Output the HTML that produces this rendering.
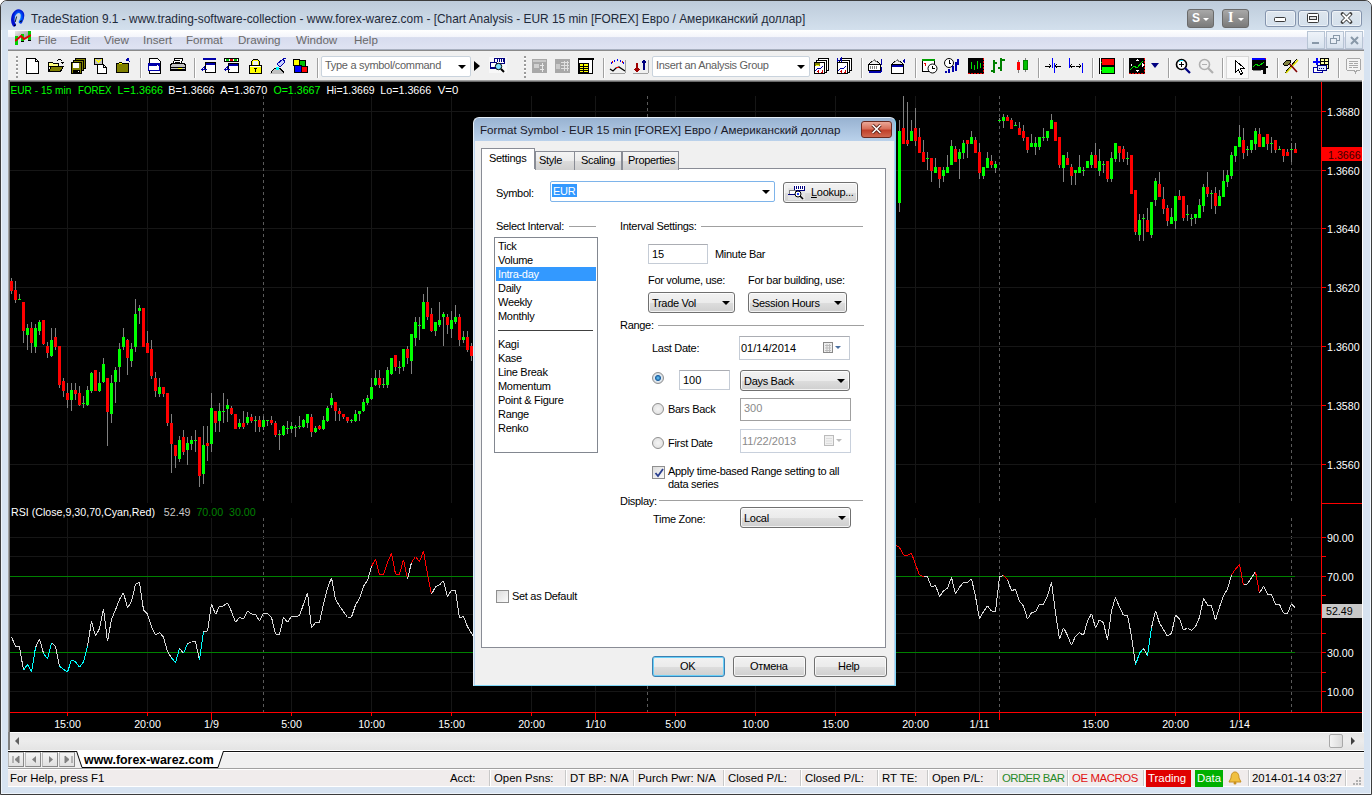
<!DOCTYPE html>
<html><head><meta charset="utf-8"><style>
*{margin:0;padding:0;box-sizing:border-box}
html,body{width:1372px;height:795px;overflow:hidden;background:#fff}
body{position:relative;font-family:"Liberation Sans",sans-serif;font-size:11px;color:#000}
.abs{position:absolute}
.t{position:absolute;white-space:pre;line-height:1}

.frame{left:0;top:0;width:1372px;height:795px;background:#d7e3f1;border:1px solid #3c3c3c;border-radius:7px 7px 0 0;box-shadow:inset 1px 1px 0 #eef4fb,inset -1px -1px 0 #eef4fb}
.title{left:1px;top:1px;width:1370px;height:29px;background:linear-gradient(#bdcbda,#d3e0ed);border-radius:6px 6px 0 0}
.ttext{font-size:11.9px;color:#1e2a3a}
.menubar{left:8px;top:30px;width:1356px;height:20px;background:linear-gradient(#ffffff 0,#f4f5fb 35%,#d7dcee 40%,#dfe3f2 100%);border-bottom:1px solid #a8b0c0}
.menu{font-size:11.6px;color:#6a6a6a}
.toolbar{left:8px;top:50px;width:1356px;height:31px;background:#f0f0f0;border-top:1px solid #8a8a8a}
.sep{position:absolute;top:58px;width:2px;height:20px;border-left:1px solid #a0a0a0;border-right:1px solid #fff}
.grip{position:absolute;top:56px;width:2px;height:22px;background:repeating-linear-gradient(#9a9a9a 0 2px,#fff 2px 3px,transparent 3px 4px)}
.combo{position:absolute;top:56px;height:21px;background:#fff;border:1px solid #c9d3dd;border-radius:2px}
.combo span{position:absolute;left:3px;top:3px;font-size:11px;letter-spacing:-0.3px;line-height:1;color:#606060;white-space:pre}
.darr{position:absolute;width:0;height:0;border-left:4px solid transparent;border-right:4px solid transparent;border-top:4px solid #000}
.ico{position:absolute;width:18px;height:18px}
.wbtn{position:absolute;top:10px;height:17px;border:1px solid #8494ad;border-radius:3px;background:linear-gradient(rgba(255,255,255,.45),rgba(255,255,255,.1));box-shadow:inset 0 0 0 1px rgba(255,255,255,.5)}
.mdibtn{position:absolute;top:31px;width:18px;height:18px;border:1px solid #b7c4d4;background:linear-gradient(#eef3f9,#d8e2ee)}

.dlg{left:473px;top:117px;width:423px;height:569px;border-radius:6px 6px 0 0;background:linear-gradient(#98b2d1 0,#bcd3ec 24px,#bcd3ec 100%);border:1px solid #e4eef8;border-right-color:#7fd8f8;border-bottom-color:#7fd8f8}
.dcont{left:475px;top:141px;width:419px;height:544px;background:#f0f0f0}
.dt{font-size:11px;letter-spacing:-0.3px;color:#000}
.tab{position:absolute;height:19px;top:151px;border:1px solid #898c95;border-bottom:none;background:linear-gradient(#f4f4f4 0,#ebebeb 50%,#dcdcdc 51%,#cfcfcf 100%)}
.edit{position:absolute;background:#fff;border:1px solid #c5ccd6;border-top-color:#abadb3}
.num{letter-spacing:0}
.btn{position:absolute;border:1px solid #707070;border-radius:3px;background:linear-gradient(#f2f2f2 0,#ebebeb 50%,#dddddd 51%,#cfcfcf 100%);box-shadow:inset 0 0 0 1px rgba(255,255,255,.75)}
.radio{position:absolute;width:12px;height:12px;border-radius:50%;border:1px solid #8f8f8f;background:radial-gradient(circle at 50% 50%,#f4f4f4 0,#dcdcdc 100%)}
.chk{position:absolute;width:13px;height:13px;border:1px solid #8f8f8f;background:linear-gradient(135deg,#dcdcdc,#fbfbfb)}
.gl{position:absolute;height:2px;background:#a0a0a0;border-bottom:1px solid #fff}
.sb{font-size:11.4px;color:#000}
.ssep{position:absolute;top:770px;width:2px;height:16px;border-left:1px solid #c8c8c8;border-right:1px solid #fff}

</style></head><body>
<div class="abs frame"></div><div class="abs title"></div><svg class="abs" style="left:11px;top:9px" width="14" height="18" viewBox="0 0 14 18"><defs><radialGradient id="ag" cx="0.6" cy="0.45" r="0.6"><stop offset="0" stop-color="#40e0ff"/><stop offset="0.5" stop-color="#0060ff"/><stop offset="1" stop-color="#0010d0"/></radialGradient></defs><path d="M3.2 15.8C1 13 1.5 6 5 3.2C8 1 11.5 2.5 11.5 6.5C11.5 9 10.5 11.5 9.6 12.8" fill="none" stroke="url(#ag)" stroke-width="3.6" stroke-linecap="round"/><path d="M5.6 7.5L4.2 13" stroke="#102030" stroke-width="1"/><path d="M9.5 13l1-1.5" stroke="#000" stroke-width="1.2"/><path d="M3 16.6l1.6-.6" stroke="#000" stroke-width="1.2"/></svg><div class="t ttext" style="left:31px;top:14px">TradeStation 9.1 - www.trading-software-collection - www.forex-warez.com - [Chart Analysis - EUR 15 min [FOREX] Евро / Американский доллар]</div><div class="abs" style="left:1187px;top:9px;width:27px;height:19px;background:linear-gradient(#a8a8a8,#7a7a7a);border:1px solid #6a6a6a;border-radius:3px"></div><div class="t" style="left:1192px;top:12px;font-size:12px;font-weight:bold;color:#fff">S</div><div class="darr" style="left:1203px;top:18px;border-top-color:#fff;border-width:3px 3px 0 3px"></div><div class="abs" style="left:1222px;top:9px;width:27px;height:19px;background:linear-gradient(#a8a8a8,#7a7a7a);border:1px solid #6a6a6a;border-radius:3px"></div><div class="t" style="left:1228px;top:11px;font-size:14px;font-weight:bold;font-family:&quot;Liberation Serif&quot;,serif;color:#fff">I</div><div class="darr" style="left:1238px;top:18px;border-top-color:#fff;border-width:3px 3px 0 3px"></div><div class="wbtn" style="left:1265px;width:31px"></div><svg class="abs" style="left:1274px;top:17px" width="12" height="6"><rect x="0.5" y="0.5" width="11" height="4" rx="1" fill="#fff" stroke="#3a3a3a"/></svg><div class="wbtn" style="left:1298px;width:31px"></div><svg class="abs" style="left:1307px;top:13px" width="12" height="10"><rect x="0.5" y="0.5" width="11" height="9" rx="1" fill="#fff" stroke="#3a3a3a"/><rect x="2.5" y="3.5" width="7" height="3" fill="#e0e0e0" stroke="#3a3a3a"/></svg><div class="wbtn" style="left:1331px;width:31px"></div><svg class="abs" style="left:1340px;top:12px" width="13" height="12" viewBox="0 0 13 12"><path d="M2.5 2l8 8M10.5 2l-8 8" stroke="#3a3a3a" stroke-width="3.6" stroke-linecap="round"/><path d="M2.5 2l8 8M10.5 2l-8 8" stroke="#fff" stroke-width="1.8"/></svg><div class="abs menubar"></div><svg class="abs" style="left:15px;top:31px" width="16" height="15" viewBox="0 0 16 15"><defs><linearGradient id="mg" x1="0" y1="0" x2="1" y2="1"><stop offset="0" stop-color="#e8e8e8"/><stop offset="1" stop-color="#808080"/></linearGradient></defs><path d="M0 0H16V4L9 8L6 5L0 10Z" fill="url(#mg)"/><rect x="0" y="5" width="3" height="9" fill="#00d000"/><rect x="6" y="3" width="3" height="8" fill="#00d000"/><rect x="6" y="10" width="3" height="1" fill="#000"/><rect x="13" y="0" width="3" height="10" fill="#00d000"/><rect x="13" y="9" width="3" height="1" fill="#000"/><path d="M0 10L6 5L9 8L16 4" stroke="#e00000" stroke-width="2" fill="none"/></svg><div class="t menu" style="left:38px;top:34px">File</div><div class="t menu" style="left:70px;top:34px">Edit</div><div class="t menu" style="left:104px;top:34px">View</div><div class="t menu" style="left:143px;top:34px">Insert</div><div class="t menu" style="left:186px;top:34px">Format</div><div class="t menu" style="left:238px;top:34px">Drawing</div><div class="t menu" style="left:296px;top:34px">Window</div><div class="t menu" style="left:354px;top:34px">Help</div><div class="mdibtn" style="left:1307px"></div><div class="abs" style="left:1312px;top:42px;width:7px;height:2px;background:#8898a8"></div><div class="mdibtn" style="left:1326px"></div><svg class="abs" style="left:1330px;top:35px" width="10" height="10"><rect x="3.5" y="0.5" width="6" height="5" fill="none" stroke="#8898a8"/><rect x="0.5" y="3.5" width="6" height="5" fill="#e8eef5" stroke="#8898a8"/></svg><div class="mdibtn" style="left:1345px"></div><svg class="abs" style="left:1350px;top:36px" width="9" height="9"><path d="M1 1l7 7M8 1l-7 7" stroke="#8898a8" stroke-width="2"/></svg><div class="abs toolbar"></div><div class="sep" style="left:140px"></div><div class="sep" style="left:194px"></div><div class="sep" style="left:317px"></div><div class="sep" style="left:603px"></div><div class="sep" style="left:861px"></div><div class="sep" style="left:915px"></div><div class="sep" style="left:1038px"></div><div class="sep" style="left:1092px"></div><div class="sep" style="left:1123px"></div><div class="sep" style="left:1168px"></div><div class="sep" style="left:1222px"></div><div class="sep" style="left:1277px"></div><div class="sep" style="left:1308px"></div><div class="sep" style="left:1338px"></div><div class="grip" style="left:16px"></div><div class="grip" style="left:524px"></div><div class="combo" style="left:321px;width:150px"><span>Type a symbol/command</span><div class="darr" style="left:136px;top:8px"></div></div><div class="abs" style="left:474px;top:61px;width:0;height:0;border-top:5px solid transparent;border-bottom:5px solid transparent;border-left:6px solid #000"></div><div class="combo" style="left:652px;width:158px"><span>Insert an Analysis Group</span><div class="darr" style="left:144px;top:8px"></div></div><div class="abs" style="left:1226px;top:56px;width:23px;height:23px;background:#fafafa;border:1px solid #d8d8d8"></div><svg class="ico" style="left:25px;top:57px" width="18" height="18" viewBox="0 0 18 18" shape-rendering="crispEdges"><path d="M1.5 1.5H10.5L13.5 4.5V16.5H1.5Z" fill="#fff" stroke="#000"/><path d="M10.5 1.5V4.5H13.5" fill="none" stroke="#000"/></svg><svg class="ico" style="left:47px;top:57px" width="18" height="18" viewBox="0 0 18 18" shape-rendering="crispEdges"><path d="M1.5 5.5H5.5L6.5 6.5H11.5V9.5H1.5Z" fill="#ffff80" stroke="#000"/><path d="M1.5 14.5L4.5 9.5H16.5L13.5 14.5Z" fill="#808000" stroke="#000"/><path d="M1.5 14.5V6.5" stroke="#000"/><path d="M9.5 4.5L11.5 2.5H13.5L15.5 4.5" fill="none" stroke="#000"/><path d="M14 5h3M15 5v2" stroke="#000"/></svg><svg class="ico" style="left:70px;top:57px" width="18" height="18" viewBox="0 0 18 18" shape-rendering="crispEdges"><rect x="5.5" y="1.5" width="10" height="10" fill="#808000" stroke="#000"/><rect x="3.5" y="3.5" width="10" height="10" fill="#808000" stroke="#000"/><rect x="1.5" y="5.5" width="10" height="11" fill="#808000" stroke="#000"/><rect x="3" y="6" width="6" height="5" fill="#fff"/><rect x="3" y="13" width="7" height="3" fill="#000"/><rect x="8" y="14" width="1" height="1" fill="#fff"/></svg><svg class="ico" style="left:93px;top:57px" width="18" height="18" viewBox="0 0 18 18" shape-rendering="crispEdges"><rect x="1.5" y="1.5" width="8" height="6" fill="#c0c0c0" stroke="#000"/><path d="M2 2l3.5 3 3.5-3" stroke="#ffff00" fill="none"/><path d="M4.5 7.5H10.5L13.5 10.5V16.5H4.5Z" fill="#fff" stroke="#000"/><path d="M10.5 7.5V10.5H13.5" fill="none" stroke="#000"/></svg><svg class="ico" style="left:115px;top:57px" width="18" height="18" viewBox="0 0 18 18" shape-rendering="crispEdges"><path d="M1.5 6.5H3.5L4.5 5.5H6.5L7.5 6.5H13.5V15.5H1.5Z" fill="#808000" stroke="#000"/><rect x="4" y="6" width="3" height="1" fill="#ffff00"/><path d="M12 2h2M12 2v2M12 2l3 3" stroke="#00a" stroke-width="1.2" fill="none"/></svg><svg class="ico" style="left:147px;top:57px" width="18" height="18" viewBox="0 0 18 18" shape-rendering="crispEdges"><path d="M2.5 1.5H10.5L13.5 4.5V16.5H2.5Z" fill="#fff" stroke="#000"/><rect x="1.5" y="6.5" width="11" height="7" fill="#fff" stroke="#00a"/><rect x="2" y="7" width="10" height="2" fill="#00a"/><rect x="10" y="8" width="1" height="1" fill="#fff"/></svg><svg class="ico" style="left:169px;top:57px" width="18" height="18" viewBox="0 0 18 18" shape-rendering="crispEdges"><path d="M5.5 1.5H13.5L12.5 6.5H4.5Z" fill="#fff" stroke="#000"/><path d="M6 3h5M6 5h5" stroke="#000"/><path d="M2.5 6.5H15.5L16.5 8.5V13.5H1.5V8.5Z" fill="#c0c0c0" stroke="#000"/><path d="M2 10h14M2 12h14" stroke="#000"/><rect x="9" y="11" width="4" height="1" fill="#ffff00"/></svg><svg class="ico" style="left:200px;top:57px" width="18" height="18" viewBox="0 0 18 18" shape-rendering="crispEdges"><rect x="3" y="1" width="13" height="2" fill="#00a"/><rect x="5.5" y="5.5" width="10" height="10" fill="#fff" stroke="#000"/><rect x="6" y="6" width="9" height="2" fill="#00a"/><path d="M1.5 12.5L3.5 10.5M1.5 12.5L3.5 14.5M2 12.5H7" stroke="#00a" fill="none"/><path d="M4 12V9" stroke="#00a"/></svg><svg class="ico" style="left:223px;top:57px" width="18" height="18" viewBox="0 0 18 18" shape-rendering="crispEdges"><rect x="1.5" y="1.5" width="14" height="3" fill="#fff" stroke="#000"/><rect x="3" y="2" width="3" height="2" fill="#00c000"/><rect x="7" y="2" width="3" height="2" fill="#e00000"/><rect x="11" y="2" width="3" height="2" fill="#00c000"/><rect x="5.5" y="6.5" width="10" height="9" fill="#fff" stroke="#000"/><rect x="6" y="7" width="9" height="2" fill="#00a"/><path d="M1.5 12.5L3.5 10.5M1.5 12.5L3.5 14.5M2 12.5H7" stroke="#00a" fill="none"/><path d="M4 12V9" stroke="#00a"/></svg><svg class="ico" style="left:248px;top:57px" width="18" height="18" viewBox="0 0 18 18" shape-rendering="crispEdges"><path d="M3.5 8.5V4.5L5.5 2.5H9.5L11.5 4.5V8.5" fill="none" stroke="#000" stroke-width="1"/><path d="M4.5 8.5V4.5L6 3H9L10.5 4.5V8.5" fill="none" stroke="#ffff00"/><rect x="1.5" y="8.5" width="12" height="8" fill="#ffff00" stroke="#000"/><rect x="2" y="9" width="11" height="1" fill="#fff"/><rect x="6" y="11" width="3" height="1" fill="#000"/><rect x="7" y="12" width="1" height="3" fill="#000"/></svg><svg class="ico" style="left:269px;top:57px" width="18" height="18" viewBox="0 0 18 18" shape-rendering="crispEdges"><path d="M8.5 7.5L14.5 1.5H16.5" stroke="#00a" fill="none"/><path d="M8 7L14 2L16 5L11 10Z" fill="#c8d0ff" stroke="#00a"/><path d="M1.5 16.5Q8 5 15.5 16.5" fill="#c0c0c0" stroke="#000"/><rect x="7" y="10" width="3" height="3" fill="#00ffff"/></svg><svg class="ico" style="left:292px;top:57px" width="18" height="18" viewBox="0 0 18 18" shape-rendering="crispEdges"><rect x="1.5" y="2.5" width="6" height="6" fill="#ffff00" stroke="#000"/><rect x="7.5" y="3.5" width="6" height="6" fill="#00c000" stroke="#000"/><rect x="2.5" y="8.5" width="7" height="7" fill="#0000ff" stroke="#000"/><rect x="9.5" y="9.5" width="6" height="6" fill="#ff0000" stroke="#000"/></svg><svg class="ico" style="left:489px;top:57px" width="18" height="18" viewBox="0 0 18 18" shape-rendering="crispEdges"><rect x="0" y="0" width="18" height="16" fill="#f8f8f8"/><rect x="5.5" y="1.5" width="10" height="5" fill="#fff" stroke="#000080"/><path d="M8 2v3M10 2v3M12 2v3M14 2v3" stroke="#000080"/><rect x="1.5" y="5.5" width="6" height="5" fill="#fff" stroke="#000080"/><path d="M1 11.5h6" stroke="#000080"/><circle cx="9.5" cy="9.5" r="3.2" fill="#80e0ff" stroke="#000" shape-rendering="auto"/><path d="M12 12l3 3" stroke="#000" stroke-width="2" shape-rendering="auto"/></svg><svg class="ico" style="left:531px;top:57px" width="18" height="18" viewBox="0 0 18 18" shape-rendering="crispEdges"><rect x="1" y="2" width="15" height="14" fill="#a8a8a8"/><rect x="2" y="3" width="13" height="2" fill="#c8c8c8"/><path d="M11 6v9M9 8h4M9 12h4" stroke="#e8e8e8"/><rect x="3" y="7" width="5" height="4" fill="#d0d0d0"/></svg><svg class="ico" style="left:554px;top:57px" width="18" height="18" viewBox="0 0 18 18" shape-rendering="crispEdges"><rect x="1" y="2" width="15" height="14" fill="#a8a8a8"/><path d="M7 5h8M7 8h8M7 11h8M10 4v10M13 4v10" stroke="#e0e0e0"/><rect x="2" y="7" width="4" height="5" fill="#c8c8c8"/></svg><svg class="ico" style="left:577px;top:57px" width="18" height="18" viewBox="0 0 18 18" shape-rendering="crispEdges"><rect x="1.5" y="1.5" width="14" height="15" fill="#fff" stroke="#000"/><rect x="1" y="1" width="16" height="2" fill="#000"/><rect x="2.5" y="6.5" width="9" height="9" fill="#ffff00" stroke="#000"/><path d="M3 9h8M3 11h8M3 13h8M6.5 7v8" stroke="#000"/></svg><svg class="ico" style="left:609px;top:57px" width="18" height="18" viewBox="0 0 18 18" shape-rendering="crispEdges"><path d="M2 5v2M5 3v2M8 2v2M11 3v2M14 5v2" stroke="#00f"/><path d="M3 4v2M13 4v2" stroke="#c00"/><path d="M1 12L4 14L7 11L10 10L13 12L16 14" stroke="#000" fill="none" shape-rendering="auto" stroke-width="1.3"/><path d="M7 11L10 10" stroke="#e00"/><path d="M1 16.5H16" stroke="#a0a0a0"/><path d="M16.5 3V16" stroke="#a0a0a0"/></svg><svg class="ico" style="left:632px;top:57px" width="18" height="18" viewBox="0 0 18 18" shape-rendering="crispEdges"><path d="M5 6v8M3 12l2 2 2-2" stroke="#a00000" fill="none" stroke-width="1.5"/><path d="M12 13V4M10 6l2-2 2 2" stroke="#000080" fill="none" stroke-width="1.5"/><path d="M1 16.5H16M16.5 3V16" stroke="#a0a0a0"/></svg><svg class="ico" style="left:813px;top:57px" width="18" height="18" viewBox="0 0 18 18" shape-rendering="crispEdges"><rect x="5.5" y="1.5" width="10" height="12" fill="#fff" stroke="#000"/><rect x="3.5" y="3.5" width="10" height="12" fill="#fff" stroke="#000"/><rect x="1.5" y="5.5" width="10" height="11" fill="#fff" stroke="#000"/><rect x="2" y="6" width="5" height="3" fill="#808000"/><path d="M3 8h3" stroke="#ffff00"/><path d="M2 14L5 11L7 12L10 9" stroke="#00a" fill="none"/><path d="M5 13v3M4 14h2M9 13v3M8 15h2" stroke="#c00"/></svg><svg class="ico" style="left:836px;top:57px" width="18" height="18" viewBox="0 0 18 18" shape-rendering="crispEdges"><rect x="5.5" y="1.5" width="10" height="12" fill="#fff" stroke="#000"/><rect x="3.5" y="3.5" width="10" height="12" fill="#fff" stroke="#000"/><rect x="1.5" y="5.5" width="10" height="11" fill="#fff" stroke="#000"/><path d="M1 5V1.5L3 4L5 1.5V5" stroke="#00a" fill="none"/><path d="M2 14L5 11L7 12L10 9" stroke="#00a" fill="none"/><path d="M5 13v3M4 14h2M9 13v3M8 15h2" stroke="#c00"/></svg><svg class="ico" style="left:867px;top:57px" width="18" height="18" viewBox="0 0 18 18" shape-rendering="crispEdges"><path d="M1.5 7.5L7.5 2.5L13.5 7.5" fill="none" stroke="#000"/><path d="M4 6L7.5 3L11 6" fill="none" stroke="#808080"/><rect x="1.5" y="7.5" width="12" height="6" fill="#fff" stroke="#000"/><path d="M3 9v3M5 9v3M7 9v3M9 9v3" stroke="#808080"/><path d="M2 15h12" stroke="#00a" stroke-width="2"/><path d="M14.5 2v6M14.5 10v5" stroke="#00a"/></svg><svg class="ico" style="left:890px;top:57px" width="18" height="18" viewBox="0 0 18 18" shape-rendering="crispEdges"><path d="M1.5 7.5L7.5 2.5L13.5 7.5" fill="none" stroke="#000"/><path d="M4 6L7.5 3L11 6" fill="none" stroke="#808080"/><rect x="1.5" y="7.5" width="12" height="9" fill="#fff" stroke="#000"/><rect x="2" y="8" width="11" height="2" fill="#00a"/><path d="M12 4l3-3v6z" fill="#00a"/></svg><svg class="ico" style="left:921px;top:57px" width="18" height="18" viewBox="0 0 18 18" shape-rendering="crispEdges"><rect x="1.5" y="3.5" width="12" height="11" fill="#fff" stroke="#000"/><rect x="1" y="2" width="13" height="2" fill="#00a000"/><path d="M3 6h2M4 6v3" stroke="#e00"/><circle cx="11.5" cy="11.5" r="4.5" fill="#fff" stroke="#000" shape-rendering="auto"/><path d="M11.5 8.5v3h2" stroke="#000" fill="none"/></svg><svg class="ico" style="left:943px;top:57px" width="18" height="18" viewBox="0 0 18 18" shape-rendering="crispEdges"><circle cx="6" cy="6" r="4.5" fill="#fff" stroke="#000" shape-rendering="auto"/><path d="M6 3v3h2" stroke="#000" fill="none"/><path d="M3 14v2M6 12v4M10 9v6M13 5v9M15 2v6" stroke="#00a" stroke-width="1.5"/></svg><svg class="ico" style="left:967px;top:57px" width="18" height="18" viewBox="0 0 18 18" shape-rendering="crispEdges"><rect x="1" y="1" width="16" height="16" fill="#000"/><path d="M16.5 1v16M1 16.5h16" stroke="#e00" stroke-dasharray="2 1"/><path d="M4 5v7M7 8v5M10 4v8M13 6v5" stroke="#00e000"/></svg><svg class="ico" style="left:990px;top:57px" width="18" height="18" viewBox="0 0 18 18" shape-rendering="crispEdges"><path d="M4 3v13M11 1v13" stroke="#008000" stroke-width="2"/><path d="M1 14h3M4 6h3M8 11h3M11 3h4" stroke="#008000" stroke-width="2"/></svg><svg class="ico" style="left:1015px;top:57px" width="18" height="18" viewBox="0 0 18 18" shape-rendering="crispEdges"><path d="M3.5 3v13M10.5 1v14" stroke="#808080"/><rect x="2" y="5" width="3" height="8" fill="#ff0000"/><rect x="8.5" y="3.5" width="4" height="9" fill="#00c000" stroke="#008000"/></svg><svg class="ico" style="left:1044px;top:57px" width="18" height="18" viewBox="0 0 18 18" shape-rendering="crispEdges"><path d="M8.5 1v10M10.5 6v10" stroke="#0000ff"/><path d="M1 9h6M5 7l2 2-2 2M17 9h-6M13 7l-2 2 2 2" stroke="#000" fill="none"/></svg><svg class="ico" style="left:1067px;top:57px" width="18" height="18" viewBox="0 0 18 18" shape-rendering="crispEdges"><path d="M2.5 1v10M15.5 6v10" stroke="#0000ff"/><path d="M3 9h5M5 7l-2 2 2 2M9 9h5M12 7l2 2-2 2" stroke="#000" fill="none"/></svg><svg class="ico" style="left:1098px;top:57px" width="18" height="18" viewBox="0 0 18 18" shape-rendering="crispEdges"><rect x="1" y="1" width="16" height="16" fill="#000"/><rect x="4" y="2" width="12" height="6" fill="#ff0000"/><rect x="4" y="10" width="12" height="6" fill="#00ff00"/><path d="M2 5h2M2 13h2" stroke="#00ff00"/><path d="M2.5 1v16" stroke="#fff"/></svg><svg class="ico" style="left:1128px;top:57px" width="18" height="18" viewBox="0 0 18 18" shape-rendering="crispEdges"><rect x="1" y="1" width="16" height="16" fill="#000"/><path d="M16.5 1v16M1 16.5h16" stroke="#e00" stroke-dasharray="2 1"/><path d="M2 13L6 9L9 11L15 4" stroke="#00e000" fill="none"/><path d="M9 2l-2 2h4zM9 15l-2-2h4zM2 8l2-2v4zM16 8l-2-2v4z" fill="#fff"/></svg><svg class="ico" style="left:1174px;top:57px" width="18" height="18" viewBox="0 0 18 18" shape-rendering="crispEdges"><circle cx="7.5" cy="7.5" r="5" fill="#fff" stroke="#000" stroke-width="1.6" shape-rendering="auto"/><path d="M5 7.5h5M7.5 5v5" stroke="#000" stroke-width="1.6"/><path d="M5 4.5a4 4 0 0 1 4-1" stroke="#00e0ff" fill="none" shape-rendering="auto"/><path d="M11 11l5 5" stroke="#000080" stroke-width="2.2" shape-rendering="auto"/></svg><svg class="ico" style="left:1197px;top:57px" width="18" height="18" viewBox="0 0 18 18" shape-rendering="crispEdges"><circle cx="7.5" cy="7.5" r="5" fill="#f0f0f0" stroke="#b0b0b0" stroke-width="1.6" shape-rendering="auto"/><path d="M5 7.5h5" stroke="#b0b0b0" stroke-width="1.6"/><path d="M11 11l5 5" stroke="#b0b0b0" stroke-width="2.2" shape-rendering="auto"/></svg><svg class="ico" style="left:1232px;top:58px" width="18" height="18" viewBox="0 0 18 18" shape-rendering="crispEdges"><path d="M3.5 2.5V14.5L6.5 11.5L8.5 16.5L10.5 15.5L8.5 10.5H12.5Z" fill="#fff" stroke="#000"/></svg><svg class="ico" style="left:1251px;top:57px" width="18" height="18" viewBox="0 0 18 18" shape-rendering="crispEdges"><rect x="1" y="1" width="14" height="12" fill="#000"/><rect x="1" y="1" width="14" height="2" fill="#0000ff"/><rect x="14" y="1" width="1" height="1" fill="#e00"/><path d="M2 10L5 7L8 9L13 5" stroke="#00e000" fill="none"/><rect x="1.5" y="12.5" width="8" height="1" fill="#808080"/><path d="M10 9h7v2h-2v6h-3v-6h-2z" fill="#000"/><path d="M11 10h5M13.5 10v6" stroke="#fff" stroke-width="0"/></svg><svg class="ico" style="left:1282px;top:57px" width="18" height="18" viewBox="0 0 18 18" shape-rendering="crispEdges"><path d="M3 16L15 2" stroke="#000" stroke-width="1"/><path d="M4 16L16 3" stroke="#e0e000" stroke-width="1.5" shape-rendering="auto"/><path d="M5 4L15 15" stroke="#800000" stroke-width="1.6" shape-rendering="auto"/><path d="M1 7L5 3L8 3L9 5L6 8L3 9Z" fill="#808040" stroke="#000"/></svg><svg class="ico" style="left:1312px;top:57px" width="18" height="18" viewBox="0 0 18 18" shape-rendering="crispEdges"><rect x="8.5" y="1.5" width="8" height="10" fill="#ffffa0" stroke="#000"/><path d="M9 4h7M9 7h7M12.5 2v9" stroke="#000"/><path d="M4.5 1v7M1 4.5h7" stroke="#0000ff" stroke-width="2"/><rect x="1.5" y="10.5" width="9" height="5" fill="#fff" stroke="#00a"/><rect x="5.5" y="8.5" width="9" height="5" fill="#e0e8ff" stroke="#000080"/><path d="M7 11h1M9 11h1M11 11h1" stroke="#000080"/></svg><svg class="ico" style="left:1345px;top:57px" width="18" height="18" viewBox="0 0 18 18" shape-rendering="crispEdges"><path d="M2.5 1.5H14.5L15.5 2.5V12.5L14.5 13.5H11.5L10.5 15.5L9.5 13.5H2.5L1.5 12.5V2.5Z" fill="#f4f4f4" stroke="#a8a8a8"/><path d="M4 4h9M4 6h4M9 6h4M4 8h9M4 10h3M8 10h5" stroke="#a8a8a8"/></svg><div class="darr" style="left:1151px;top:63px;border-top-color:#000080;border-width:5px 4px 0 4px"></div>
<div class="abs" style="left:9px;top:81px;width:1353px;height:651px;overflow:hidden"><svg id="chart" width="1353" height="651" viewBox="9 81 1353 651" shape-rendering="crispEdges"><rect x="9" y="81" width="1353" height="651" fill="#000"/><line x1="9" y1="111.5" x2="1321" y2="111.5" stroke="#161616" stroke-width="1"/><line x1="9" y1="170.5" x2="1321" y2="170.5" stroke="#161616" stroke-width="1"/><line x1="9" y1="228.5" x2="1321" y2="228.5" stroke="#161616" stroke-width="1"/><line x1="9" y1="287.5" x2="1321" y2="287.5" stroke="#161616" stroke-width="1"/><line x1="9" y1="346.5" x2="1321" y2="346.5" stroke="#161616" stroke-width="1"/><line x1="9" y1="405.5" x2="1321" y2="405.5" stroke="#161616" stroke-width="1"/><line x1="9" y1="464.5" x2="1321" y2="464.5" stroke="#161616" stroke-width="1"/><line x1="67.5" y1="96" x2="67.5" y2="503" stroke="#161616"/><line x1="67.5" y1="518" x2="67.5" y2="712" stroke="#161616"/><line x1="147.5" y1="96" x2="147.5" y2="503" stroke="#161616"/><line x1="147.5" y1="518" x2="147.5" y2="712" stroke="#161616"/><line x1="211.5" y1="96" x2="211.5" y2="503" stroke="#161616"/><line x1="211.5" y1="518" x2="211.5" y2="712" stroke="#161616"/><line x1="291.5" y1="96" x2="291.5" y2="503" stroke="#161616"/><line x1="291.5" y1="518" x2="291.5" y2="712" stroke="#161616"/><line x1="371.5" y1="96" x2="371.5" y2="503" stroke="#161616"/><line x1="371.5" y1="518" x2="371.5" y2="712" stroke="#161616"/><line x1="451.5" y1="96" x2="451.5" y2="503" stroke="#161616"/><line x1="451.5" y1="518" x2="451.5" y2="712" stroke="#161616"/><line x1="531.5" y1="96" x2="531.5" y2="503" stroke="#161616"/><line x1="531.5" y1="518" x2="531.5" y2="712" stroke="#161616"/><line x1="595.5" y1="96" x2="595.5" y2="503" stroke="#161616"/><line x1="595.5" y1="518" x2="595.5" y2="712" stroke="#161616"/><line x1="675.5" y1="96" x2="675.5" y2="503" stroke="#161616"/><line x1="675.5" y1="518" x2="675.5" y2="712" stroke="#161616"/><line x1="755.5" y1="96" x2="755.5" y2="503" stroke="#161616"/><line x1="755.5" y1="518" x2="755.5" y2="712" stroke="#161616"/><line x1="835.5" y1="96" x2="835.5" y2="503" stroke="#161616"/><line x1="835.5" y1="518" x2="835.5" y2="712" stroke="#161616"/><line x1="915.5" y1="96" x2="915.5" y2="503" stroke="#161616"/><line x1="915.5" y1="518" x2="915.5" y2="712" stroke="#161616"/><line x1="979.5" y1="96" x2="979.5" y2="503" stroke="#161616"/><line x1="979.5" y1="518" x2="979.5" y2="712" stroke="#161616"/><line x1="1095.5" y1="96" x2="1095.5" y2="503" stroke="#161616"/><line x1="1095.5" y1="518" x2="1095.5" y2="712" stroke="#161616"/><line x1="1175.5" y1="96" x2="1175.5" y2="503" stroke="#161616"/><line x1="1175.5" y1="518" x2="1175.5" y2="712" stroke="#161616"/><line x1="1239.5" y1="96" x2="1239.5" y2="503" stroke="#161616"/><line x1="1239.5" y1="518" x2="1239.5" y2="712" stroke="#161616"/><line x1="263.5" y1="96" x2="263.5" y2="503" stroke="#5a5a5a" stroke-dasharray="3 3"/><line x1="263.5" y1="518" x2="263.5" y2="712" stroke="#5a5a5a" stroke-dasharray="3 3"/><line x1="647.5" y1="96" x2="647.5" y2="503" stroke="#5a5a5a" stroke-dasharray="3 3"/><line x1="647.5" y1="518" x2="647.5" y2="712" stroke="#5a5a5a" stroke-dasharray="3 3"/><line x1="999.5" y1="96" x2="999.5" y2="503" stroke="#5a5a5a" stroke-dasharray="3 3"/><line x1="999.5" y1="518" x2="999.5" y2="712" stroke="#5a5a5a" stroke-dasharray="3 3"/><line x1="1291.5" y1="96" x2="1291.5" y2="503" stroke="#5a5a5a" stroke-dasharray="3 3"/><line x1="1291.5" y1="518" x2="1291.5" y2="712" stroke="#5a5a5a" stroke-dasharray="3 3"/><line x1="9" y1="537.5" x2="1321" y2="537.5" stroke="#161616"/><line x1="9" y1="556.5" x2="1321" y2="556.5" stroke="#161616"/><line x1="9" y1="576.5" x2="1321" y2="576.5" stroke="#161616"/><line x1="9" y1="595.5" x2="1321" y2="595.5" stroke="#161616"/><line x1="9" y1="614.5" x2="1321" y2="614.5" stroke="#161616"/><line x1="9" y1="633.5" x2="1321" y2="633.5" stroke="#161616"/><line x1="9" y1="652.5" x2="1321" y2="652.5" stroke="#161616"/><line x1="9" y1="672.5" x2="1321" y2="672.5" stroke="#161616"/><line x1="9" y1="691.5" x2="1321" y2="691.5" stroke="#161616"/><line x1="9" y1="576.5" x2="1295" y2="576.5" stroke="#008000"/><line x1="9" y1="652.5" x2="1295" y2="652.5" stroke="#008000"/><rect x="11" y="278" width="1" height="16" fill="#808080"/><rect x="10" y="281" width="3" height="10" fill="#ff0000"/><rect x="15" y="281" width="1" height="22" fill="#808080"/><rect x="14" y="290" width="3" height="10" fill="#ff0000"/><rect x="19" y="294" width="1" height="6" fill="#808080"/><rect x="18" y="299" width="3" height="1" fill="#00ff00"/><rect x="23" y="302" width="1" height="41" fill="#808080"/><rect x="22" y="302" width="3" height="29" fill="#ff0000"/><rect x="27" y="324" width="1" height="26" fill="#808080"/><rect x="26" y="328" width="3" height="7" fill="#00ff00"/><rect x="31" y="322" width="1" height="31" fill="#808080"/><rect x="30" y="328" width="3" height="15" fill="#ff0000"/><rect x="35" y="324" width="1" height="29" fill="#808080"/><rect x="34" y="328" width="3" height="19" fill="#00ff00"/><rect x="39" y="320" width="1" height="15" fill="#808080"/><rect x="38" y="322" width="3" height="9" fill="#00ff00"/><rect x="43" y="320" width="1" height="25" fill="#808080"/><rect x="42" y="320" width="3" height="24" fill="#ff0000"/><rect x="47" y="342" width="1" height="16" fill="#808080"/><rect x="46" y="346" width="3" height="7" fill="#ff0000"/><rect x="51" y="328" width="1" height="29" fill="#808080"/><rect x="50" y="340" width="3" height="16" fill="#00ff00"/><rect x="55" y="328" width="1" height="22" fill="#808080"/><rect x="54" y="337" width="3" height="10" fill="#ff0000"/><rect x="59" y="346" width="1" height="42" fill="#808080"/><rect x="58" y="346" width="3" height="39" fill="#ff0000"/><rect x="63" y="378" width="1" height="19" fill="#808080"/><rect x="62" y="381" width="3" height="10" fill="#ff0000"/><rect x="67" y="383" width="1" height="25" fill="#808080"/><rect x="66" y="393" width="3" height="7" fill="#ff0000"/><rect x="71" y="383" width="1" height="28" fill="#808080"/><rect x="70" y="390" width="3" height="10" fill="#00ff00"/><rect x="75" y="383" width="1" height="17" fill="#808080"/><rect x="74" y="390" width="3" height="4" fill="#ff0000"/><rect x="79" y="386" width="1" height="20" fill="#808080"/><rect x="78" y="393" width="3" height="12" fill="#ff0000"/><rect x="83" y="396" width="1" height="12" fill="#808080"/><rect x="82" y="403" width="3" height="1" fill="#00ff00"/><rect x="87" y="386" width="1" height="20" fill="#808080"/><rect x="86" y="390" width="3" height="15" fill="#00ff00"/><rect x="91" y="372" width="1" height="21" fill="#808080"/><rect x="90" y="373" width="3" height="18" fill="#00ff00"/><rect x="95" y="370" width="1" height="21" fill="#808080"/><rect x="94" y="370" width="3" height="21" fill="#ff0000"/><rect x="99" y="372" width="1" height="20" fill="#808080"/><rect x="98" y="383" width="3" height="8" fill="#00ff00"/><rect x="103" y="358" width="1" height="25" fill="#808080"/><rect x="102" y="364" width="3" height="18" fill="#00ff00"/><rect x="107" y="378" width="1" height="68" fill="#808080"/><rect x="106" y="378" width="3" height="34" fill="#ff0000"/><rect x="111" y="375" width="1" height="48" fill="#808080"/><rect x="110" y="383" width="3" height="31" fill="#00ff00"/><rect x="115" y="367" width="1" height="36" fill="#808080"/><rect x="114" y="370" width="3" height="12" fill="#00ff00"/><rect x="119" y="343" width="1" height="39" fill="#808080"/><rect x="118" y="349" width="3" height="18" fill="#00ff00"/><rect x="123" y="328" width="1" height="22" fill="#808080"/><rect x="122" y="337" width="3" height="10" fill="#00ff00"/><rect x="127" y="339" width="1" height="36" fill="#808080"/><rect x="126" y="340" width="3" height="18" fill="#ff0000"/><rect x="131" y="343" width="1" height="24" fill="#808080"/><rect x="130" y="349" width="3" height="12" fill="#00ff00"/><rect x="135" y="299" width="1" height="53" fill="#808080"/><rect x="134" y="314" width="3" height="33" fill="#00ff00"/><rect x="139" y="305" width="1" height="19" fill="#808080"/><rect x="138" y="308" width="3" height="3" fill="#00ff00"/><rect x="143" y="308" width="1" height="39" fill="#808080"/><rect x="142" y="308" width="3" height="39" fill="#ff0000"/><rect x="147" y="331" width="1" height="22" fill="#808080"/><rect x="146" y="343" width="3" height="10" fill="#ff0000"/><rect x="151" y="340" width="1" height="39" fill="#808080"/><rect x="150" y="349" width="3" height="27" fill="#ff0000"/><rect x="155" y="372" width="1" height="25" fill="#808080"/><rect x="154" y="378" width="3" height="13" fill="#ff0000"/><rect x="159" y="378" width="1" height="19" fill="#808080"/><rect x="158" y="387" width="3" height="7" fill="#00ff00"/><rect x="163" y="387" width="1" height="10" fill="#808080"/><rect x="162" y="387" width="3" height="7" fill="#ff0000"/><rect x="167" y="393" width="1" height="33" fill="#808080"/><rect x="166" y="393" width="3" height="30" fill="#ff0000"/><rect x="171" y="414" width="1" height="59" fill="#808080"/><rect x="170" y="423" width="3" height="21" fill="#ff0000"/><rect x="175" y="446" width="1" height="22" fill="#808080"/><rect x="174" y="445" width="3" height="11" fill="#ff0000"/><rect x="179" y="436" width="1" height="26" fill="#808080"/><rect x="178" y="440" width="3" height="19" fill="#00ff00"/><rect x="183" y="430" width="1" height="25" fill="#808080"/><rect x="182" y="437" width="3" height="15" fill="#ff0000"/><rect x="187" y="437" width="1" height="28" fill="#808080"/><rect x="186" y="443" width="3" height="7" fill="#00ff00"/><rect x="191" y="436" width="1" height="14" fill="#808080"/><rect x="190" y="440" width="3" height="4" fill="#00ff00"/><rect x="195" y="430" width="1" height="22" fill="#808080"/><rect x="194" y="440" width="3" height="1" fill="#00ff00"/><rect x="199" y="437" width="1" height="50" fill="#808080"/><rect x="198" y="437" width="3" height="39" fill="#ff0000"/><rect x="203" y="426" width="1" height="58" fill="#808080"/><rect x="202" y="445" width="3" height="29" fill="#00ff00"/><rect x="207" y="426" width="1" height="35" fill="#808080"/><rect x="206" y="443" width="3" height="3" fill="#ff0000"/><rect x="211" y="393" width="1" height="59" fill="#808080"/><rect x="210" y="408" width="3" height="36" fill="#00ff00"/><rect x="215" y="411" width="1" height="21" fill="#808080"/><rect x="214" y="411" width="3" height="12" fill="#ff0000"/><rect x="219" y="403" width="1" height="29" fill="#808080"/><rect x="218" y="411" width="3" height="10" fill="#00ff00"/><rect x="223" y="393" width="1" height="30" fill="#808080"/><rect x="222" y="411" width="3" height="1" fill="#00ff00"/><rect x="227" y="399" width="1" height="23" fill="#808080"/><rect x="226" y="405" width="3" height="4" fill="#00ff00"/><rect x="231" y="406" width="1" height="9" fill="#808080"/><rect x="230" y="408" width="3" height="6" fill="#ff0000"/><rect x="235" y="414" width="1" height="15" fill="#808080"/><rect x="234" y="414" width="3" height="15" fill="#ff0000"/><rect x="239" y="419" width="1" height="10" fill="#808080"/><rect x="238" y="423" width="3" height="4" fill="#00ff00"/><rect x="243" y="411" width="1" height="18" fill="#808080"/><rect x="242" y="423" width="3" height="4" fill="#ff0000"/><rect x="247" y="412" width="1" height="13" fill="#808080"/><rect x="246" y="417" width="3" height="6" fill="#00ff00"/><rect x="251" y="414" width="1" height="9" fill="#808080"/><rect x="250" y="417" width="3" height="4" fill="#ff0000"/><rect x="255" y="416" width="1" height="16" fill="#808080"/><rect x="254" y="420" width="3" height="1" fill="#00ff00"/><rect x="259" y="416" width="1" height="16" fill="#808080"/><rect x="258" y="420" width="3" height="7" fill="#ff0000"/><rect x="263" y="416" width="1" height="14" fill="#808080"/><rect x="262" y="420" width="3" height="7" fill="#00ff00"/><rect x="267" y="420" width="1" height="6" fill="#808080"/><rect x="266" y="420" width="3" height="1" fill="#00ff00"/><rect x="271" y="416" width="1" height="9" fill="#808080"/><rect x="270" y="420" width="3" height="3" fill="#ff0000"/><rect x="275" y="421" width="1" height="16" fill="#808080"/><rect x="274" y="423" width="3" height="12" fill="#ff0000"/><rect x="279" y="430" width="1" height="20" fill="#808080"/><rect x="278" y="434" width="3" height="1" fill="#00ff00"/><rect x="283" y="425" width="1" height="11" fill="#808080"/><rect x="282" y="426" width="3" height="9" fill="#00ff00"/><rect x="287" y="421" width="1" height="13" fill="#808080"/><rect x="286" y="428" width="3" height="1" fill="#00ff00"/><rect x="291" y="422" width="1" height="11" fill="#808080"/><rect x="290" y="426" width="3" height="3" fill="#00ff00"/><rect x="295" y="425" width="1" height="12" fill="#808080"/><rect x="294" y="427" width="3" height="1" fill="#00ff00"/><rect x="299" y="416" width="1" height="13" fill="#808080"/><rect x="298" y="426" width="3" height="1" fill="#00ff00"/><rect x="303" y="419" width="1" height="9" fill="#808080"/><rect x="302" y="420" width="3" height="7" fill="#00ff00"/><rect x="307" y="414" width="1" height="14" fill="#808080"/><rect x="306" y="414" width="3" height="9" fill="#00ff00"/><rect x="311" y="414" width="1" height="23" fill="#808080"/><rect x="310" y="417" width="3" height="15" fill="#ff0000"/><rect x="315" y="426" width="1" height="7" fill="#808080"/><rect x="314" y="428" width="3" height="4" fill="#00ff00"/><rect x="319" y="425" width="1" height="5" fill="#808080"/><rect x="318" y="426" width="3" height="3" fill="#ff0000"/><rect x="323" y="416" width="1" height="14" fill="#808080"/><rect x="322" y="420" width="3" height="9" fill="#00ff00"/><rect x="327" y="406" width="1" height="16" fill="#808080"/><rect x="326" y="408" width="3" height="13" fill="#00ff00"/><rect x="331" y="393" width="1" height="15" fill="#808080"/><rect x="330" y="398" width="3" height="7" fill="#00ff00"/><rect x="335" y="402" width="1" height="19" fill="#808080"/><rect x="334" y="402" width="3" height="9" fill="#ff0000"/><rect x="339" y="408" width="1" height="13" fill="#808080"/><rect x="338" y="411" width="3" height="3" fill="#ff0000"/><rect x="343" y="414" width="1" height="5" fill="#808080"/><rect x="342" y="414" width="3" height="3" fill="#ff0000"/><rect x="347" y="417" width="1" height="6" fill="#808080"/><rect x="346" y="417" width="3" height="4" fill="#ff0000"/><rect x="351" y="419" width="1" height="4" fill="#808080"/><rect x="350" y="420" width="3" height="1" fill="#00ff00"/><rect x="355" y="410" width="1" height="12" fill="#808080"/><rect x="354" y="414" width="3" height="7" fill="#00ff00"/><rect x="359" y="411" width="1" height="10" fill="#808080"/><rect x="358" y="411" width="3" height="3" fill="#00ff00"/><rect x="363" y="399" width="1" height="13" fill="#808080"/><rect x="362" y="402" width="3" height="9" fill="#00ff00"/><rect x="367" y="395" width="1" height="10" fill="#808080"/><rect x="366" y="398" width="3" height="5" fill="#00ff00"/><rect x="371" y="378" width="1" height="22" fill="#808080"/><rect x="370" y="387" width="3" height="12" fill="#00ff00"/><rect x="375" y="370" width="1" height="16" fill="#808080"/><rect x="374" y="378" width="3" height="7" fill="#00ff00"/><rect x="379" y="370" width="1" height="18" fill="#808080"/><rect x="378" y="378" width="3" height="7" fill="#ff0000"/><rect x="383" y="378" width="1" height="10" fill="#808080"/><rect x="382" y="384" width="3" height="1" fill="#00ff00"/><rect x="387" y="367" width="1" height="21" fill="#808080"/><rect x="386" y="370" width="3" height="15" fill="#00ff00"/><rect x="391" y="358" width="1" height="17" fill="#808080"/><rect x="390" y="358" width="3" height="16" fill="#00ff00"/><rect x="395" y="355" width="1" height="16" fill="#808080"/><rect x="394" y="355" width="3" height="12" fill="#ff0000"/><rect x="399" y="361" width="1" height="13" fill="#808080"/><rect x="398" y="367" width="3" height="1" fill="#00ff00"/><rect x="403" y="349" width="1" height="22" fill="#808080"/><rect x="402" y="349" width="3" height="18" fill="#00ff00"/><rect x="407" y="346" width="1" height="18" fill="#808080"/><rect x="406" y="349" width="3" height="9" fill="#ff0000"/><rect x="411" y="334" width="1" height="40" fill="#808080"/><rect x="410" y="334" width="3" height="27" fill="#00ff00"/><rect x="415" y="317" width="1" height="29" fill="#808080"/><rect x="414" y="322" width="3" height="16" fill="#00ff00"/><rect x="419" y="317" width="1" height="23" fill="#808080"/><rect x="418" y="325" width="3" height="1" fill="#00ff00"/><rect x="423" y="294" width="1" height="35" fill="#808080"/><rect x="422" y="302" width="3" height="27" fill="#00ff00"/><rect x="427" y="287" width="1" height="33" fill="#808080"/><rect x="426" y="302" width="3" height="15" fill="#ff0000"/><rect x="431" y="308" width="1" height="24" fill="#808080"/><rect x="430" y="314" width="3" height="17" fill="#ff0000"/><rect x="435" y="322" width="1" height="14" fill="#808080"/><rect x="434" y="322" width="3" height="9" fill="#00ff00"/><rect x="439" y="302" width="1" height="25" fill="#808080"/><rect x="438" y="320" width="3" height="5" fill="#00ff00"/><rect x="443" y="312" width="1" height="34" fill="#808080"/><rect x="442" y="314" width="3" height="3" fill="#00ff00"/><rect x="447" y="314" width="1" height="20" fill="#808080"/><rect x="446" y="317" width="3" height="8" fill="#ff0000"/><rect x="451" y="311" width="1" height="27" fill="#808080"/><rect x="450" y="320" width="3" height="9" fill="#00ff00"/><rect x="455" y="305" width="1" height="19" fill="#808080"/><rect x="454" y="317" width="3" height="5" fill="#00ff00"/><rect x="459" y="314" width="1" height="32" fill="#808080"/><rect x="458" y="317" width="3" height="23" fill="#ff0000"/><rect x="463" y="331" width="1" height="12" fill="#808080"/><rect x="462" y="337" width="3" height="3" fill="#00ff00"/><rect x="467" y="331" width="1" height="21" fill="#808080"/><rect x="466" y="337" width="3" height="13" fill="#ff0000"/><rect x="471" y="343" width="1" height="18" fill="#808080"/><rect x="470" y="346" width="3" height="10" fill="#ff0000"/><rect x="899" y="120" width="1" height="92" fill="#808080"/><rect x="898" y="131" width="3" height="72" fill="#00ff00"/><rect x="903" y="96" width="1" height="48" fill="#808080"/><rect x="902" y="128" width="3" height="16" fill="#ff0000"/><rect x="907" y="102" width="1" height="44" fill="#808080"/><rect x="906" y="140" width="3" height="4" fill="#ff0000"/><rect x="911" y="120" width="1" height="21" fill="#808080"/><rect x="910" y="131" width="3" height="10" fill="#00ff00"/><rect x="915" y="108" width="1" height="38" fill="#808080"/><rect x="914" y="128" width="3" height="13" fill="#ff0000"/><rect x="919" y="128" width="1" height="25" fill="#808080"/><rect x="918" y="137" width="3" height="16" fill="#ff0000"/><rect x="923" y="140" width="1" height="22" fill="#808080"/><rect x="922" y="152" width="3" height="10" fill="#ff0000"/><rect x="927" y="152" width="1" height="18" fill="#808080"/><rect x="926" y="158" width="3" height="1" fill="#00ff00"/><rect x="931" y="158" width="1" height="24" fill="#808080"/><rect x="930" y="158" width="3" height="13" fill="#ff0000"/><rect x="935" y="158" width="1" height="15" fill="#808080"/><rect x="934" y="167" width="3" height="6" fill="#00ff00"/><rect x="939" y="167" width="1" height="21" fill="#808080"/><rect x="938" y="167" width="3" height="12" fill="#ff0000"/><rect x="943" y="167" width="1" height="15" fill="#808080"/><rect x="942" y="170" width="3" height="6" fill="#00ff00"/><rect x="947" y="155" width="1" height="18" fill="#808080"/><rect x="946" y="167" width="3" height="6" fill="#00ff00"/><rect x="951" y="140" width="1" height="25" fill="#808080"/><rect x="950" y="146" width="3" height="19" fill="#00ff00"/><rect x="955" y="146" width="1" height="16" fill="#808080"/><rect x="954" y="149" width="3" height="13" fill="#ff0000"/><rect x="959" y="149" width="1" height="30" fill="#808080"/><rect x="958" y="152" width="3" height="7" fill="#00ff00"/><rect x="963" y="140" width="1" height="19" fill="#808080"/><rect x="962" y="143" width="3" height="10" fill="#00ff00"/><rect x="967" y="140" width="1" height="18" fill="#808080"/><rect x="966" y="140" width="3" height="4" fill="#ff0000"/><rect x="971" y="131" width="1" height="13" fill="#808080"/><rect x="970" y="137" width="3" height="7" fill="#00ff00"/><rect x="975" y="137" width="1" height="16" fill="#808080"/><rect x="974" y="140" width="3" height="13" fill="#ff0000"/><rect x="979" y="143" width="1" height="36" fill="#808080"/><rect x="978" y="152" width="3" height="21" fill="#ff0000"/><rect x="983" y="167" width="1" height="12" fill="#808080"/><rect x="982" y="167" width="3" height="9" fill="#00ff00"/><rect x="987" y="152" width="1" height="16" fill="#808080"/><rect x="986" y="158" width="3" height="10" fill="#00ff00"/><rect x="991" y="155" width="1" height="13" fill="#808080"/><rect x="990" y="161" width="3" height="4" fill="#ff0000"/><rect x="995" y="161" width="1" height="12" fill="#808080"/><rect x="994" y="164" width="3" height="4" fill="#00ff00"/><rect x="999" y="118" width="1" height="4" fill="#808080"/><rect x="998" y="120" width="3" height="1" fill="#00ff00"/><rect x="1003" y="114" width="1" height="14" fill="#808080"/><rect x="1002" y="117" width="3" height="4" fill="#00ff00"/><rect x="1007" y="115" width="1" height="6" fill="#808080"/><rect x="1006" y="117" width="3" height="4" fill="#ff0000"/><rect x="1011" y="118" width="1" height="11" fill="#808080"/><rect x="1010" y="120" width="3" height="9" fill="#ff0000"/><rect x="1015" y="122" width="1" height="4" fill="#808080"/><rect x="1014" y="125" width="3" height="1" fill="#00ff00"/><rect x="1019" y="122" width="1" height="13" fill="#808080"/><rect x="1018" y="128" width="3" height="7" fill="#ff0000"/><rect x="1023" y="125" width="1" height="16" fill="#808080"/><rect x="1022" y="131" width="3" height="7" fill="#ff0000"/><rect x="1027" y="137" width="1" height="16" fill="#808080"/><rect x="1026" y="137" width="3" height="13" fill="#ff0000"/><rect x="1031" y="134" width="1" height="13" fill="#808080"/><rect x="1030" y="143" width="3" height="4" fill="#00ff00"/><rect x="1035" y="137" width="1" height="18" fill="#808080"/><rect x="1034" y="143" width="3" height="4" fill="#00ff00"/><rect x="1039" y="137" width="1" height="13" fill="#808080"/><rect x="1038" y="137" width="3" height="10" fill="#00ff00"/><rect x="1043" y="128" width="1" height="13" fill="#808080"/><rect x="1042" y="137" width="3" height="1" fill="#00ff00"/><rect x="1047" y="131" width="1" height="10" fill="#808080"/><rect x="1046" y="131" width="3" height="7" fill="#00ff00"/><rect x="1051" y="114" width="1" height="15" fill="#808080"/><rect x="1050" y="120" width="3" height="9" fill="#00ff00"/><rect x="1055" y="122" width="1" height="19" fill="#808080"/><rect x="1054" y="122" width="3" height="19" fill="#ff0000"/><rect x="1059" y="137" width="1" height="31" fill="#808080"/><rect x="1058" y="137" width="3" height="28" fill="#ff0000"/><rect x="1063" y="155" width="1" height="27" fill="#808080"/><rect x="1062" y="155" width="3" height="13" fill="#00ff00"/><rect x="1067" y="152" width="1" height="13" fill="#808080"/><rect x="1066" y="158" width="3" height="7" fill="#ff0000"/><rect x="1071" y="164" width="1" height="21" fill="#808080"/><rect x="1070" y="167" width="3" height="9" fill="#ff0000"/><rect x="1075" y="170" width="1" height="15" fill="#808080"/><rect x="1074" y="170" width="3" height="3" fill="#00ff00"/><rect x="1079" y="155" width="1" height="18" fill="#808080"/><rect x="1078" y="167" width="3" height="6" fill="#00ff00"/><rect x="1083" y="167" width="1" height="9" fill="#808080"/><rect x="1082" y="170" width="3" height="1" fill="#00ff00"/><rect x="1087" y="161" width="1" height="7" fill="#808080"/><rect x="1086" y="161" width="3" height="7" fill="#00ff00"/><rect x="1091" y="152" width="1" height="16" fill="#808080"/><rect x="1090" y="155" width="3" height="10" fill="#00ff00"/><rect x="1095" y="143" width="1" height="25" fill="#808080"/><rect x="1094" y="155" width="3" height="13" fill="#ff0000"/><rect x="1099" y="149" width="1" height="27" fill="#808080"/><rect x="1098" y="161" width="3" height="10" fill="#00ff00"/><rect x="1103" y="161" width="1" height="12" fill="#808080"/><rect x="1102" y="164" width="3" height="1" fill="#00ff00"/><rect x="1107" y="161" width="1" height="21" fill="#808080"/><rect x="1106" y="161" width="3" height="18" fill="#ff0000"/><rect x="1111" y="152" width="1" height="30" fill="#808080"/><rect x="1110" y="158" width="3" height="21" fill="#00ff00"/><rect x="1115" y="143" width="1" height="19" fill="#808080"/><rect x="1114" y="143" width="3" height="16" fill="#00ff00"/><rect x="1119" y="146" width="1" height="16" fill="#808080"/><rect x="1118" y="146" width="3" height="7" fill="#ff0000"/><rect x="1123" y="146" width="1" height="16" fill="#808080"/><rect x="1122" y="149" width="3" height="10" fill="#ff0000"/><rect x="1127" y="152" width="1" height="13" fill="#808080"/><rect x="1126" y="158" width="3" height="1" fill="#00ff00"/><rect x="1131" y="155" width="1" height="39" fill="#808080"/><rect x="1130" y="155" width="3" height="39" fill="#ff0000"/><rect x="1135" y="190" width="1" height="45" fill="#808080"/><rect x="1134" y="190" width="3" height="42" fill="#ff0000"/><rect x="1139" y="214" width="1" height="27" fill="#808080"/><rect x="1138" y="220" width="3" height="15" fill="#00ff00"/><rect x="1143" y="214" width="1" height="27" fill="#808080"/><rect x="1142" y="218" width="3" height="1" fill="#00ff00"/><rect x="1147" y="208" width="1" height="24" fill="#808080"/><rect x="1146" y="220" width="3" height="12" fill="#ff0000"/><rect x="1151" y="202" width="1" height="36" fill="#808080"/><rect x="1150" y="202" width="3" height="33" fill="#00ff00"/><rect x="1155" y="178" width="1" height="28" fill="#808080"/><rect x="1154" y="181" width="3" height="19" fill="#00ff00"/><rect x="1159" y="172" width="1" height="25" fill="#808080"/><rect x="1158" y="184" width="3" height="13" fill="#ff0000"/><rect x="1163" y="187" width="1" height="27" fill="#808080"/><rect x="1162" y="199" width="3" height="10" fill="#ff0000"/><rect x="1167" y="205" width="1" height="21" fill="#808080"/><rect x="1166" y="208" width="3" height="13" fill="#ff0000"/><rect x="1171" y="208" width="1" height="16" fill="#808080"/><rect x="1170" y="217" width="3" height="7" fill="#00ff00"/><rect x="1175" y="196" width="1" height="33" fill="#808080"/><rect x="1174" y="196" width="3" height="25" fill="#00ff00"/><rect x="1179" y="190" width="1" height="10" fill="#808080"/><rect x="1178" y="196" width="3" height="4" fill="#ff0000"/><rect x="1183" y="196" width="1" height="25" fill="#808080"/><rect x="1182" y="196" width="3" height="22" fill="#ff0000"/><rect x="1187" y="205" width="1" height="16" fill="#808080"/><rect x="1186" y="214" width="3" height="1" fill="#00ff00"/><rect x="1191" y="214" width="1" height="12" fill="#808080"/><rect x="1190" y="218" width="3" height="1" fill="#00ff00"/><rect x="1195" y="214" width="1" height="10" fill="#808080"/><rect x="1194" y="214" width="3" height="4" fill="#00ff00"/><rect x="1199" y="199" width="1" height="19" fill="#808080"/><rect x="1198" y="205" width="3" height="13" fill="#00ff00"/><rect x="1203" y="184" width="1" height="28" fill="#808080"/><rect x="1202" y="187" width="3" height="19" fill="#00ff00"/><rect x="1207" y="172" width="1" height="25" fill="#808080"/><rect x="1206" y="187" width="3" height="7" fill="#ff0000"/><rect x="1211" y="190" width="1" height="19" fill="#808080"/><rect x="1210" y="193" width="3" height="1" fill="#00ff00"/><rect x="1215" y="187" width="1" height="27" fill="#808080"/><rect x="1214" y="193" width="3" height="13" fill="#ff0000"/><rect x="1219" y="190" width="1" height="16" fill="#808080"/><rect x="1218" y="196" width="3" height="10" fill="#00ff00"/><rect x="1223" y="170" width="1" height="27" fill="#808080"/><rect x="1222" y="181" width="3" height="16" fill="#00ff00"/><rect x="1227" y="170" width="1" height="17" fill="#808080"/><rect x="1226" y="175" width="3" height="7" fill="#00ff00"/><rect x="1231" y="152" width="1" height="27" fill="#808080"/><rect x="1230" y="155" width="3" height="21" fill="#00ff00"/><rect x="1235" y="146" width="1" height="16" fill="#808080"/><rect x="1234" y="146" width="3" height="10" fill="#00ff00"/><rect x="1239" y="125" width="1" height="22" fill="#808080"/><rect x="1238" y="137" width="3" height="10" fill="#00ff00"/><rect x="1243" y="128" width="1" height="31" fill="#808080"/><rect x="1242" y="140" width="3" height="13" fill="#ff0000"/><rect x="1247" y="146" width="1" height="10" fill="#808080"/><rect x="1246" y="149" width="3" height="1" fill="#00ff00"/><rect x="1251" y="140" width="1" height="13" fill="#808080"/><rect x="1250" y="140" width="3" height="10" fill="#00ff00"/><rect x="1255" y="128" width="1" height="22" fill="#808080"/><rect x="1254" y="131" width="3" height="13" fill="#00ff00"/><rect x="1259" y="128" width="1" height="19" fill="#808080"/><rect x="1258" y="134" width="3" height="13" fill="#ff0000"/><rect x="1263" y="137" width="1" height="10" fill="#808080"/><rect x="1262" y="137" width="3" height="10" fill="#00ff00"/><rect x="1267" y="134" width="1" height="16" fill="#808080"/><rect x="1266" y="134" width="3" height="10" fill="#ff0000"/><rect x="1271" y="137" width="1" height="16" fill="#808080"/><rect x="1270" y="143" width="3" height="1" fill="#00ff00"/><rect x="1275" y="140" width="1" height="13" fill="#808080"/><rect x="1274" y="140" width="3" height="10" fill="#ff0000"/><rect x="1279" y="146" width="1" height="4" fill="#808080"/><rect x="1278" y="149" width="3" height="1" fill="#00ff00"/><rect x="1283" y="149" width="1" height="13" fill="#808080"/><rect x="1282" y="149" width="3" height="7" fill="#ff0000"/><rect x="1287" y="149" width="1" height="7" fill="#808080"/><rect x="1286" y="152" width="3" height="4" fill="#ff0000"/><rect x="1291" y="143" width="1" height="19" fill="#808080"/><rect x="1290" y="149" width="3" height="1" fill="#00ff00"/><rect x="1295" y="143" width="1" height="10" fill="#808080"/><rect x="1294" y="149" width="3" height="4" fill="#ff0000"/><g shape-rendering="crispEdges" stroke-width="1" fill="none"><line x1="11.5" y1="637.2" x2="15.5" y2="646.2" stroke="#d8d8d8"/><line x1="15.5" y1="646.2" x2="19.5" y2="646.6" stroke="#d8d8d8"/><line x1="19.5" y1="646.6" x2="23.5" y2="670.2" stroke="#d8d8d8"/><line x1="23.5" y1="670.2" x2="27.5" y2="664.5" stroke="#00ffff"/><line x1="27.5" y1="664.5" x2="31.5" y2="672.1" stroke="#00ffff"/><line x1="31.5" y1="672.1" x2="35.5" y2="647.5" stroke="#00ffff"/><line x1="35.5" y1="647.5" x2="39.5" y2="639.0" stroke="#d8d8d8"/><line x1="39.5" y1="639.0" x2="43.5" y2="653.2" stroke="#d8d8d8"/><line x1="43.5" y1="653.2" x2="47.5" y2="658.9" stroke="#00ffff"/><line x1="47.5" y1="658.9" x2="51.5" y2="642.8" stroke="#00ffff"/><line x1="51.5" y1="642.8" x2="55.5" y2="646.6" stroke="#d8d8d8"/><line x1="55.5" y1="646.6" x2="59.5" y2="666.4" stroke="#d8d8d8"/><line x1="59.5" y1="666.4" x2="63.5" y2="669.2" stroke="#00ffff"/><line x1="63.5" y1="669.2" x2="67.5" y2="672.1" stroke="#00ffff"/><line x1="67.5" y1="672.1" x2="71.5" y2="659.8" stroke="#00ffff"/><line x1="71.5" y1="659.8" x2="75.5" y2="661.7" stroke="#00ffff"/><line x1="75.5" y1="661.7" x2="79.5" y2="667.4" stroke="#00ffff"/><line x1="79.5" y1="667.4" x2="83.5" y2="661.7" stroke="#00ffff"/><line x1="83.5" y1="661.7" x2="87.5" y2="645.7" stroke="#00ffff"/><line x1="87.5" y1="645.7" x2="91.5" y2="621.5" stroke="#d8d8d8"/><line x1="91.5" y1="621.5" x2="95.5" y2="636.2" stroke="#d8d8d8"/><line x1="95.5" y1="636.2" x2="99.5" y2="628.7" stroke="#d8d8d8"/><line x1="99.5" y1="628.7" x2="103.5" y2="608.9" stroke="#d8d8d8"/><line x1="103.5" y1="608.9" x2="107.5" y2="641.5" stroke="#d8d8d8"/><line x1="107.5" y1="641.5" x2="111.5" y2="619.2" stroke="#d8d8d8"/><line x1="111.5" y1="619.2" x2="115.5" y2="609.8" stroke="#d8d8d8"/><line x1="115.5" y1="609.8" x2="119.5" y2="599.4" stroke="#d8d8d8"/><line x1="119.5" y1="599.4" x2="123.5" y2="592.8" stroke="#d8d8d8"/><line x1="123.5" y1="592.8" x2="127.5" y2="607.9" stroke="#d8d8d8"/><line x1="127.5" y1="607.9" x2="131.5" y2="601.3" stroke="#d8d8d8"/><line x1="131.5" y1="601.3" x2="135.5" y2="584.3" stroke="#d8d8d8"/><line x1="135.5" y1="584.3" x2="139.5" y2="582.5" stroke="#d8d8d8"/><line x1="139.5" y1="582.5" x2="143.5" y2="609.8" stroke="#d8d8d8"/><line x1="143.5" y1="609.8" x2="147.5" y2="614.0" stroke="#d8d8d8"/><line x1="147.5" y1="614.0" x2="151.5" y2="626.8" stroke="#d8d8d8"/><line x1="151.5" y1="626.8" x2="155.5" y2="635.3" stroke="#d8d8d8"/><line x1="155.5" y1="635.3" x2="159.5" y2="632.5" stroke="#d8d8d8"/><line x1="159.5" y1="632.5" x2="163.5" y2="637.2" stroke="#d8d8d8"/><line x1="163.5" y1="637.2" x2="167.5" y2="651.3" stroke="#d8d8d8"/><line x1="167.5" y1="651.3" x2="171.5" y2="657.9" stroke="#d8d8d8"/><line x1="171.5" y1="657.9" x2="175.5" y2="662.6" stroke="#00ffff"/><line x1="175.5" y1="662.6" x2="179.5" y2="648.5" stroke="#00ffff"/><line x1="179.5" y1="648.5" x2="183.5" y2="653.2" stroke="#d8d8d8"/><line x1="183.5" y1="653.2" x2="187.5" y2="643.8" stroke="#00ffff"/><line x1="187.5" y1="643.8" x2="191.5" y2="641.9" stroke="#d8d8d8"/><line x1="191.5" y1="641.9" x2="195.5" y2="641.9" stroke="#d8d8d8"/><line x1="195.5" y1="641.9" x2="199.5" y2="659.8" stroke="#d8d8d8"/><line x1="199.5" y1="659.8" x2="203.5" y2="631.9" stroke="#00ffff"/><line x1="203.5" y1="631.9" x2="207.5" y2="631.5" stroke="#d8d8d8"/><line x1="207.5" y1="631.5" x2="211.5" y2="603.8" stroke="#d8d8d8"/><line x1="211.5" y1="603.8" x2="215.5" y2="614.5" stroke="#d8d8d8"/><line x1="215.5" y1="614.5" x2="219.5" y2="606.4" stroke="#d8d8d8"/><line x1="219.5" y1="606.4" x2="223.5" y2="606.0" stroke="#d8d8d8"/><line x1="223.5" y1="606.0" x2="227.5" y2="602.6" stroke="#d8d8d8"/><line x1="227.5" y1="602.6" x2="231.5" y2="611.7" stroke="#d8d8d8"/><line x1="231.5" y1="611.7" x2="235.5" y2="622.1" stroke="#d8d8d8"/><line x1="235.5" y1="622.1" x2="239.5" y2="617.4" stroke="#d8d8d8"/><line x1="239.5" y1="617.4" x2="243.5" y2="619.2" stroke="#d8d8d8"/><line x1="243.5" y1="619.2" x2="247.5" y2="610.8" stroke="#d8d8d8"/><line x1="247.5" y1="610.8" x2="251.5" y2="614.0" stroke="#d8d8d8"/><line x1="251.5" y1="614.0" x2="255.5" y2="614.5" stroke="#d8d8d8"/><line x1="255.5" y1="614.5" x2="259.5" y2="621.1" stroke="#d8d8d8"/><line x1="259.5" y1="621.1" x2="263.5" y2="613.2" stroke="#d8d8d8"/><line x1="263.5" y1="613.2" x2="267.5" y2="613.6" stroke="#d8d8d8"/><line x1="267.5" y1="613.6" x2="271.5" y2="617.4" stroke="#d8d8d8"/><line x1="271.5" y1="617.4" x2="275.5" y2="634.3" stroke="#d8d8d8"/><line x1="275.5" y1="634.3" x2="279.5" y2="634.3" stroke="#d8d8d8"/><line x1="279.5" y1="634.3" x2="283.5" y2="617.4" stroke="#d8d8d8"/><line x1="283.5" y1="617.4" x2="287.5" y2="622.1" stroke="#d8d8d8"/><line x1="287.5" y1="622.1" x2="291.5" y2="616.4" stroke="#d8d8d8"/><line x1="291.5" y1="616.4" x2="295.5" y2="616.4" stroke="#d8d8d8"/><line x1="295.5" y1="616.4" x2="299.5" y2="615.8" stroke="#d8d8d8"/><line x1="299.5" y1="615.8" x2="303.5" y2="604.2" stroke="#d8d8d8"/><line x1="303.5" y1="604.2" x2="307.5" y2="592.8" stroke="#d8d8d8"/><line x1="307.5" y1="592.8" x2="311.5" y2="627.7" stroke="#d8d8d8"/><line x1="311.5" y1="627.7" x2="315.5" y2="622.6" stroke="#d8d8d8"/><line x1="315.5" y1="622.6" x2="319.5" y2="622.1" stroke="#d8d8d8"/><line x1="319.5" y1="622.1" x2="323.5" y2="604.2" stroke="#d8d8d8"/><line x1="323.5" y1="604.2" x2="327.5" y2="588.1" stroke="#d8d8d8"/><line x1="327.5" y1="588.1" x2="331.5" y2="577.7" stroke="#d8d8d8"/><line x1="331.5" y1="577.7" x2="335.5" y2="599.4" stroke="#d8d8d8"/><line x1="335.5" y1="599.4" x2="339.5" y2="606.0" stroke="#d8d8d8"/><line x1="339.5" y1="606.0" x2="343.5" y2="611.7" stroke="#d8d8d8"/><line x1="343.5" y1="611.7" x2="347.5" y2="617.4" stroke="#d8d8d8"/><line x1="347.5" y1="617.4" x2="351.5" y2="617.0" stroke="#d8d8d8"/><line x1="351.5" y1="617.0" x2="355.5" y2="605.1" stroke="#d8d8d8"/><line x1="355.5" y1="605.1" x2="359.5" y2="598.5" stroke="#d8d8d8"/><line x1="359.5" y1="598.5" x2="363.5" y2="586.2" stroke="#d8d8d8"/><line x1="363.5" y1="586.2" x2="367.5" y2="580.6" stroke="#d8d8d8"/><line x1="367.5" y1="580.6" x2="371.5" y2="566.4" stroke="#d8d8d8"/><line x1="371.5" y1="566.4" x2="375.5" y2="558.9" stroke="#ff0000"/><line x1="375.5" y1="558.9" x2="379.5" y2="574.9" stroke="#ff0000"/><line x1="379.5" y1="574.9" x2="383.5" y2="574.9" stroke="#ff0000"/><line x1="383.5" y1="574.9" x2="387.5" y2="562.6" stroke="#ff0000"/><line x1="387.5" y1="562.6" x2="391.5" y2="553.2" stroke="#ff0000"/><line x1="391.5" y1="553.2" x2="395.5" y2="574.0" stroke="#ff0000"/><line x1="395.5" y1="574.0" x2="399.5" y2="574.0" stroke="#ff0000"/><line x1="399.5" y1="574.0" x2="403.5" y2="559.8" stroke="#ff0000"/><line x1="403.5" y1="559.8" x2="407.5" y2="578.7" stroke="#ff0000"/><line x1="407.5" y1="578.7" x2="411.5" y2="562.6" stroke="#d8d8d8"/><line x1="411.5" y1="562.6" x2="415.5" y2="556.6" stroke="#ff0000"/><line x1="415.5" y1="556.6" x2="419.5" y2="561.7" stroke="#ff0000"/><line x1="419.5" y1="561.7" x2="423.5" y2="551.3" stroke="#ff0000"/><line x1="423.5" y1="551.3" x2="427.5" y2="574.0" stroke="#ff0000"/><line x1="427.5" y1="574.0" x2="431.5" y2="594.3" stroke="#ff0000"/><line x1="431.5" y1="594.3" x2="435.5" y2="586.8" stroke="#d8d8d8"/><line x1="435.5" y1="586.8" x2="439.5" y2="584.9" stroke="#d8d8d8"/><line x1="439.5" y1="584.9" x2="443.5" y2="580.6" stroke="#d8d8d8"/><line x1="443.5" y1="580.6" x2="447.5" y2="596.6" stroke="#d8d8d8"/><line x1="447.5" y1="596.6" x2="451.5" y2="590.0" stroke="#d8d8d8"/><line x1="451.5" y1="590.0" x2="455.5" y2="590.0" stroke="#d8d8d8"/><line x1="455.5" y1="590.0" x2="459.5" y2="618.3" stroke="#d8d8d8"/><line x1="459.5" y1="618.3" x2="463.5" y2="616.4" stroke="#d8d8d8"/><line x1="463.5" y1="616.4" x2="467.5" y2="626.8" stroke="#d8d8d8"/><line x1="467.5" y1="626.8" x2="471.5" y2="633.4" stroke="#d8d8d8"/><line x1="471.5" y1="633.4" x2="475.5" y2="640.0" stroke="#d8d8d8"/><line x1="895.5" y1="545.0" x2="899.5" y2="547.5" stroke="#ff0000"/><line x1="899.5" y1="547.5" x2="903.5" y2="555.1" stroke="#ff0000"/><line x1="903.5" y1="555.1" x2="907.5" y2="555.1" stroke="#ff0000"/><line x1="907.5" y1="555.1" x2="911.5" y2="553.2" stroke="#ff0000"/><line x1="911.5" y1="553.2" x2="915.5" y2="564.5" stroke="#ff0000"/><line x1="915.5" y1="564.5" x2="919.5" y2="574.9" stroke="#ff0000"/><line x1="919.5" y1="574.9" x2="923.5" y2="576.8" stroke="#ff0000"/><line x1="923.5" y1="576.8" x2="927.5" y2="576.8" stroke="#d8d8d8"/><line x1="927.5" y1="576.8" x2="931.5" y2="586.8" stroke="#d8d8d8"/><line x1="931.5" y1="586.8" x2="935.5" y2="585.3" stroke="#d8d8d8"/><line x1="935.5" y1="585.3" x2="939.5" y2="596.6" stroke="#d8d8d8"/><line x1="939.5" y1="596.6" x2="943.5" y2="590.9" stroke="#d8d8d8"/><line x1="943.5" y1="590.9" x2="947.5" y2="588.1" stroke="#d8d8d8"/><line x1="947.5" y1="588.1" x2="951.5" y2="577.4" stroke="#d8d8d8"/><line x1="951.5" y1="577.4" x2="955.5" y2="593.8" stroke="#d8d8d8"/><line x1="955.5" y1="593.8" x2="959.5" y2="587.2" stroke="#d8d8d8"/><line x1="959.5" y1="587.2" x2="963.5" y2="582.5" stroke="#d8d8d8"/><line x1="963.5" y1="582.5" x2="967.5" y2="582.5" stroke="#d8d8d8"/><line x1="967.5" y1="582.5" x2="971.5" y2="578.7" stroke="#d8d8d8"/><line x1="971.5" y1="578.7" x2="975.5" y2="596.6" stroke="#d8d8d8"/><line x1="975.5" y1="596.6" x2="979.5" y2="618.9" stroke="#d8d8d8"/><line x1="979.5" y1="618.9" x2="983.5" y2="611.7" stroke="#d8d8d8"/><line x1="983.5" y1="611.7" x2="987.5" y2="605.7" stroke="#d8d8d8"/><line x1="987.5" y1="605.7" x2="991.5" y2="611.3" stroke="#d8d8d8"/><line x1="991.5" y1="611.3" x2="995.5" y2="611.3" stroke="#d8d8d8"/><line x1="995.5" y1="611.3" x2="999.5" y2="576.8" stroke="#d8d8d8"/><line x1="999.5" y1="576.8" x2="1003.5" y2="575.5" stroke="#d8d8d8"/><line x1="1003.5" y1="575.5" x2="1007.5" y2="579.6" stroke="#ff0000"/><line x1="1007.5" y1="579.6" x2="1011.5" y2="590.6" stroke="#d8d8d8"/><line x1="1011.5" y1="590.6" x2="1015.5" y2="589.4" stroke="#d8d8d8"/><line x1="1015.5" y1="589.4" x2="1019.5" y2="601.3" stroke="#d8d8d8"/><line x1="1019.5" y1="601.3" x2="1023.5" y2="606.0" stroke="#d8d8d8"/><line x1="1023.5" y1="606.0" x2="1027.5" y2="619.2" stroke="#d8d8d8"/><line x1="1027.5" y1="619.2" x2="1031.5" y2="612.6" stroke="#d8d8d8"/><line x1="1031.5" y1="612.6" x2="1035.5" y2="611.7" stroke="#d8d8d8"/><line x1="1035.5" y1="611.7" x2="1039.5" y2="604.5" stroke="#d8d8d8"/><line x1="1039.5" y1="604.5" x2="1043.5" y2="604.2" stroke="#d8d8d8"/><line x1="1043.5" y1="604.2" x2="1047.5" y2="595.7" stroke="#d8d8d8"/><line x1="1047.5" y1="595.7" x2="1051.5" y2="582.5" stroke="#d8d8d8"/><line x1="1051.5" y1="582.5" x2="1055.5" y2="612.6" stroke="#d8d8d8"/><line x1="1055.5" y1="612.6" x2="1059.5" y2="639.0" stroke="#d8d8d8"/><line x1="1059.5" y1="639.0" x2="1063.5" y2="627.7" stroke="#d8d8d8"/><line x1="1063.5" y1="627.7" x2="1067.5" y2="635.3" stroke="#d8d8d8"/><line x1="1067.5" y1="635.3" x2="1071.5" y2="645.3" stroke="#d8d8d8"/><line x1="1071.5" y1="645.3" x2="1075.5" y2="636.2" stroke="#d8d8d8"/><line x1="1075.5" y1="636.2" x2="1079.5" y2="632.5" stroke="#d8d8d8"/><line x1="1079.5" y1="632.5" x2="1083.5" y2="635.3" stroke="#d8d8d8"/><line x1="1083.5" y1="635.3" x2="1087.5" y2="621.1" stroke="#d8d8d8"/><line x1="1087.5" y1="621.1" x2="1091.5" y2="613.6" stroke="#d8d8d8"/><line x1="1091.5" y1="613.6" x2="1095.5" y2="627.7" stroke="#d8d8d8"/><line x1="1095.5" y1="627.7" x2="1099.5" y2="619.6" stroke="#d8d8d8"/><line x1="1099.5" y1="619.6" x2="1103.5" y2="623.0" stroke="#d8d8d8"/><line x1="1103.5" y1="623.0" x2="1107.5" y2="640.0" stroke="#d8d8d8"/><line x1="1107.5" y1="640.0" x2="1111.5" y2="610.8" stroke="#d8d8d8"/><line x1="1111.5" y1="610.8" x2="1115.5" y2="597.5" stroke="#d8d8d8"/><line x1="1115.5" y1="597.5" x2="1119.5" y2="607.0" stroke="#d8d8d8"/><line x1="1119.5" y1="607.0" x2="1123.5" y2="615.5" stroke="#d8d8d8"/><line x1="1123.5" y1="615.5" x2="1127.5" y2="615.5" stroke="#d8d8d8"/><line x1="1127.5" y1="615.5" x2="1131.5" y2="636.2" stroke="#d8d8d8"/><line x1="1131.5" y1="636.2" x2="1135.5" y2="664.9" stroke="#d8d8d8"/><line x1="1135.5" y1="664.9" x2="1139.5" y2="653.2" stroke="#00ffff"/><line x1="1139.5" y1="653.2" x2="1143.5" y2="648.5" stroke="#00ffff"/><line x1="1143.5" y1="648.5" x2="1147.5" y2="656.0" stroke="#d8d8d8"/><line x1="1147.5" y1="656.0" x2="1151.5" y2="627.7" stroke="#00ffff"/><line x1="1151.5" y1="627.7" x2="1155.5" y2="610.8" stroke="#d8d8d8"/><line x1="1155.5" y1="610.8" x2="1159.5" y2="623.0" stroke="#d8d8d8"/><line x1="1159.5" y1="623.0" x2="1163.5" y2="629.6" stroke="#d8d8d8"/><line x1="1163.5" y1="629.6" x2="1167.5" y2="636.2" stroke="#d8d8d8"/><line x1="1167.5" y1="636.2" x2="1171.5" y2="633.4" stroke="#d8d8d8"/><line x1="1171.5" y1="633.4" x2="1175.5" y2="615.1" stroke="#d8d8d8"/><line x1="1175.5" y1="615.1" x2="1179.5" y2="618.9" stroke="#d8d8d8"/><line x1="1179.5" y1="618.9" x2="1183.5" y2="630.2" stroke="#d8d8d8"/><line x1="1183.5" y1="630.2" x2="1187.5" y2="627.7" stroke="#d8d8d8"/><line x1="1187.5" y1="627.7" x2="1191.5" y2="630.6" stroke="#d8d8d8"/><line x1="1191.5" y1="630.6" x2="1195.5" y2="626.8" stroke="#d8d8d8"/><line x1="1195.5" y1="626.8" x2="1199.5" y2="617.4" stroke="#d8d8d8"/><line x1="1199.5" y1="617.4" x2="1203.5" y2="598.5" stroke="#d8d8d8"/><line x1="1203.5" y1="598.5" x2="1207.5" y2="605.1" stroke="#d8d8d8"/><line x1="1207.5" y1="605.1" x2="1211.5" y2="606.0" stroke="#d8d8d8"/><line x1="1211.5" y1="606.0" x2="1215.5" y2="620.2" stroke="#d8d8d8"/><line x1="1215.5" y1="620.2" x2="1219.5" y2="607.0" stroke="#d8d8d8"/><line x1="1219.5" y1="607.0" x2="1223.5" y2="595.7" stroke="#d8d8d8"/><line x1="1223.5" y1="595.7" x2="1227.5" y2="589.1" stroke="#d8d8d8"/><line x1="1227.5" y1="589.1" x2="1231.5" y2="574.9" stroke="#d8d8d8"/><line x1="1231.5" y1="574.9" x2="1235.5" y2="569.2" stroke="#ff0000"/><line x1="1235.5" y1="569.2" x2="1239.5" y2="564.5" stroke="#ff0000"/><line x1="1239.5" y1="564.5" x2="1243.5" y2="585.3" stroke="#ff0000"/><line x1="1243.5" y1="585.3" x2="1247.5" y2="583.8" stroke="#d8d8d8"/><line x1="1247.5" y1="583.8" x2="1251.5" y2="577.7" stroke="#d8d8d8"/><line x1="1251.5" y1="577.7" x2="1255.5" y2="571.7" stroke="#d8d8d8"/><line x1="1255.5" y1="571.7" x2="1259.5" y2="593.2" stroke="#ff0000"/><line x1="1259.5" y1="593.2" x2="1263.5" y2="586.2" stroke="#d8d8d8"/><line x1="1263.5" y1="586.2" x2="1267.5" y2="594.3" stroke="#d8d8d8"/><line x1="1267.5" y1="594.3" x2="1271.5" y2="594.7" stroke="#d8d8d8"/><line x1="1271.5" y1="594.7" x2="1275.5" y2="604.2" stroke="#d8d8d8"/><line x1="1275.5" y1="604.2" x2="1279.5" y2="604.5" stroke="#d8d8d8"/><line x1="1279.5" y1="604.5" x2="1283.5" y2="613.2" stroke="#d8d8d8"/><line x1="1283.5" y1="613.2" x2="1287.5" y2="613.2" stroke="#d8d8d8"/><line x1="1287.5" y1="613.2" x2="1291.5" y2="603.8" stroke="#d8d8d8"/><line x1="1291.5" y1="603.8" x2="1295.5" y2="608.3" stroke="#d8d8d8"/></g><line x1="1321.5" y1="81" x2="1321.5" y2="712" stroke="#ff0000"/><line x1="1322" y1="503.5" x2="1362" y2="503.5" stroke="#ff0000"/><line x1="1322" y1="111.5" x2="1326" y2="111.5" stroke="#ff0000"/><text x="1327" y="115.5" font-family="Liberation Sans" font-size="10.67" fill="#fff">1.3680</text><line x1="1322" y1="170.5" x2="1326" y2="170.5" stroke="#ff0000"/><text x="1327" y="174.5" font-family="Liberation Sans" font-size="10.67" fill="#fff">1.3660</text><line x1="1322" y1="228.5" x2="1326" y2="228.5" stroke="#ff0000"/><text x="1327" y="232.5" font-family="Liberation Sans" font-size="10.67" fill="#fff">1.3640</text><line x1="1322" y1="287.5" x2="1326" y2="287.5" stroke="#ff0000"/><text x="1327" y="291.5" font-family="Liberation Sans" font-size="10.67" fill="#fff">1.3620</text><line x1="1322" y1="346.5" x2="1326" y2="346.5" stroke="#ff0000"/><text x="1327" y="350.5" font-family="Liberation Sans" font-size="10.67" fill="#fff">1.3600</text><line x1="1322" y1="405.5" x2="1326" y2="405.5" stroke="#ff0000"/><text x="1327" y="409.5" font-family="Liberation Sans" font-size="10.67" fill="#fff">1.3580</text><line x1="1322" y1="464.5" x2="1326" y2="464.5" stroke="#ff0000"/><text x="1327" y="468.5" font-family="Liberation Sans" font-size="10.67" fill="#fff">1.3560</text><rect x="1322" y="147" width="40" height="14" fill="#ff0000"/><text x="1328" y="158.5" font-family="Liberation Sans" font-size="10.67" fill="#3a0000">1.3666</text><line x1="1322" y1="537.5" x2="1326" y2="537.5" stroke="#ff0000"/><line x1="1322" y1="556.5" x2="1326" y2="556.5" stroke="#ff0000"/><line x1="1322" y1="576.5" x2="1326" y2="576.5" stroke="#ff0000"/><line x1="1322" y1="595.5" x2="1326" y2="595.5" stroke="#ff0000"/><line x1="1322" y1="614.5" x2="1326" y2="614.5" stroke="#ff0000"/><line x1="1322" y1="633.5" x2="1326" y2="633.5" stroke="#ff0000"/><line x1="1322" y1="652.5" x2="1326" y2="652.5" stroke="#ff0000"/><line x1="1322" y1="672.5" x2="1326" y2="672.5" stroke="#ff0000"/><line x1="1322" y1="691.5" x2="1326" y2="691.5" stroke="#ff0000"/><text x="1327" y="541.5" font-family="Liberation Sans" font-size="10.67" fill="#fff">90.00</text><text x="1327" y="580.5" font-family="Liberation Sans" font-size="10.67" fill="#fff">70.00</text><text x="1327" y="656.5" font-family="Liberation Sans" font-size="10.67" fill="#fff">30.00</text><text x="1327" y="695.5" font-family="Liberation Sans" font-size="10.67" fill="#fff">10.00</text><rect x="1322" y="604" width="40" height="14" fill="#c8c8c8"/><text x="1326" y="615" font-family="Liberation Sans" font-size="10.67" fill="#000">52.49</text><line x1="9" y1="712.5" x2="1362" y2="712.5" stroke="#ff0000"/><line x1="67.5" y1="712" x2="67.5" y2="716" stroke="#ff0000"/><text x="67.5" y="728" text-anchor="middle" font-family="Liberation Sans" font-size="10.67" fill="#fff">15:00</text><line x1="147.5" y1="712" x2="147.5" y2="716" stroke="#ff0000"/><text x="147.5" y="728" text-anchor="middle" font-family="Liberation Sans" font-size="10.67" fill="#fff">20:00</text><line x1="211.5" y1="712" x2="211.5" y2="720" stroke="#ff0000"/><text x="211.5" y="728" text-anchor="middle" font-family="Liberation Sans" font-size="10.67" fill="#fff">1/9</text><line x1="291.5" y1="712" x2="291.5" y2="716" stroke="#ff0000"/><text x="291.5" y="728" text-anchor="middle" font-family="Liberation Sans" font-size="10.67" fill="#fff">5:00</text><line x1="371.5" y1="712" x2="371.5" y2="716" stroke="#ff0000"/><text x="371.5" y="728" text-anchor="middle" font-family="Liberation Sans" font-size="10.67" fill="#fff">10:00</text><line x1="451.5" y1="712" x2="451.5" y2="716" stroke="#ff0000"/><text x="451.5" y="728" text-anchor="middle" font-family="Liberation Sans" font-size="10.67" fill="#fff">15:00</text><line x1="531.5" y1="712" x2="531.5" y2="716" stroke="#ff0000"/><text x="531.5" y="728" text-anchor="middle" font-family="Liberation Sans" font-size="10.67" fill="#fff">20:00</text><line x1="595.5" y1="712" x2="595.5" y2="720" stroke="#ff0000"/><text x="595.5" y="728" text-anchor="middle" font-family="Liberation Sans" font-size="10.67" fill="#fff">1/10</text><line x1="675.5" y1="712" x2="675.5" y2="716" stroke="#ff0000"/><text x="675.5" y="728" text-anchor="middle" font-family="Liberation Sans" font-size="10.67" fill="#fff">5:00</text><line x1="755.5" y1="712" x2="755.5" y2="716" stroke="#ff0000"/><text x="755.5" y="728" text-anchor="middle" font-family="Liberation Sans" font-size="10.67" fill="#fff">10:00</text><line x1="835.5" y1="712" x2="835.5" y2="716" stroke="#ff0000"/><text x="835.5" y="728" text-anchor="middle" font-family="Liberation Sans" font-size="10.67" fill="#fff">15:00</text><line x1="915.5" y1="712" x2="915.5" y2="716" stroke="#ff0000"/><text x="915.5" y="728" text-anchor="middle" font-family="Liberation Sans" font-size="10.67" fill="#fff">20:00</text><line x1="979.5" y1="712" x2="979.5" y2="720" stroke="#ff0000"/><text x="979.5" y="728" text-anchor="middle" font-family="Liberation Sans" font-size="10.67" fill="#fff">1/11</text><line x1="1095.5" y1="712" x2="1095.5" y2="716" stroke="#ff0000"/><text x="1095.5" y="728" text-anchor="middle" font-family="Liberation Sans" font-size="10.67" fill="#fff">15:00</text><line x1="1175.5" y1="712" x2="1175.5" y2="716" stroke="#ff0000"/><text x="1175.5" y="728" text-anchor="middle" font-family="Liberation Sans" font-size="10.67" fill="#fff">20:00</text><line x1="1239.5" y1="712" x2="1239.5" y2="720" stroke="#ff0000"/><text x="1239.5" y="728" text-anchor="middle" font-family="Liberation Sans" font-size="10.67" fill="#fff">1/14</text><line x1="999.5" y1="712" x2="999.5" y2="720" stroke="#ff0000"/><g font-family="Liberation Sans" font-size="10.67"><text x="10.5" y="94" fill="#00ff00" textLength="60.8" lengthAdjust="spacingAndGlyphs">EUR - 15 min</text><text x="78" y="94" fill="#00ff00" textLength="33.6" lengthAdjust="spacingAndGlyphs">FOREX</text><text x="117.6" y="94" fill="#00ff00" textLength="45.3" lengthAdjust="spacingAndGlyphs">L=1.3666</text><text x="168.3" y="94" fill="#ffffff" textLength="46.3" lengthAdjust="spacingAndGlyphs">B=1.3666</text><text x="220.3" y="94" fill="#ffffff" textLength="47" lengthAdjust="spacingAndGlyphs">A=1.3670</text><text x="273.4" y="94" fill="#00ff00" textLength="47" lengthAdjust="spacingAndGlyphs">O=1.3667</text><text x="326.5" y="94" fill="#ffffff" textLength="48.1" lengthAdjust="spacingAndGlyphs">Hi=1.3669</text><text x="380.3" y="94" fill="#ffffff" textLength="50.9" lengthAdjust="spacingAndGlyphs">Lo=1.3666</text><text x="437.7" y="94" fill="#ffffff" textLength="20.6" lengthAdjust="spacingAndGlyphs">V=0</text></g><text x="11" y="516" font-family="Liberation Sans" font-size="10.67" xml:space="preserve"><tspan fill="#ffffff">RSI (Close,9,30,70,Cyan,Red)</tspan><tspan fill="#c8c8c8">   52.49 </tspan><tspan fill="#008000"> 70.00  30.00</tspan></text></svg></div>
<div class="abs" style="left:8px;top:80px;width:1355px;height:2px;border-top:1px solid #a0a0a0;border-bottom:1px solid #696969"></div><div class="abs" style="left:8px;top:80px;width:2px;height:652px;border-left:1px solid #a0a0a0;border-right:1px solid #696969"></div><div class="abs" style="left:1362px;top:80px;width:1px;height:652px;background:#fff"></div><div class="abs" style="left:8px;top:732px;width:1356px;height:18px;background:linear-gradient(#fff 0,#fff 1px,#e6e6e6 1px,#ececec 50%,#e4e4e4 100%);border-left:2px solid #808080"></div><div class="abs" style="left:15px;top:737px;width:0;height:0;border-top:4px solid transparent;border-bottom:4px solid transparent;border-right:4px solid #606060"></div><div class="abs" style="left:1329px;top:734px;width:14px;height:14px;border:1px solid #a8a8a8;border-radius:2px;background:linear-gradient(90deg,#f4f4f4,#dadada)"></div><div class="abs" style="left:1351px;top:737px;width:0;height:0;border-top:4px solid transparent;border-bottom:4px solid transparent;border-left:4px solid #404040"></div><div class="abs" style="left:8px;top:750px;width:1356px;height:19px;background:linear-gradient(#fff 0,#fff 1px,#111 1px,#111 2px,#fff 2px,#fff 3px,#f0f0f0 3px);border-bottom:1px solid #a0a0a0"></div><div class="abs" style="left:8px;top:752px;width:16px;height:15px;background:linear-gradient(#f4f4f4,#e0e0e0);border:1px solid #b8b8b8;border-right-color:#888;border-bottom-color:#888"></div><div class="abs" style="left:25px;top:752px;width:16px;height:15px;background:linear-gradient(#f4f4f4,#e0e0e0);border:1px solid #b8b8b8;border-right-color:#888;border-bottom-color:#888"></div><div class="abs" style="left:42px;top:752px;width:16px;height:15px;background:linear-gradient(#f4f4f4,#e0e0e0);border:1px solid #b8b8b8;border-right-color:#888;border-bottom-color:#888"></div><div class="abs" style="left:59px;top:752px;width:16px;height:15px;background:linear-gradient(#f4f4f4,#e0e0e0);border:1px solid #b8b8b8;border-right-color:#888;border-bottom-color:#888"></div><svg class="abs" style="left:9px;top:752px" width="68" height="15" viewBox="0 0 68 15"><path d="M4 4v7M10 4l-4 3.5 4 3.5z" fill="#808080" stroke="#808080"/><path d="M27 4l-4 3.5 4 3.5z" fill="#808080"/><path d="M40 4l4 3.5-4 3.5z" fill="#808080"/><path d="M63 4v7M56 4l4 3.5-4 3.5z" fill="#808080" stroke="#808080"/></svg><svg class="abs" style="left:76px;top:750px" width="150" height="19" viewBox="0 0 150 19"><path d="M0.5 1 L6 17.5 H142 L147.5 1" fill="#fff" stroke="#000" stroke-width="1"/></svg><div class="t sb" style="left:84px;top:754px;font-size:12.4px;font-weight:bold;color:#000">www.forex-warez.com</div><div class="abs" style="left:8px;top:769px;width:1356px;height:18px;background:#f0ecec;border-top:1px solid #fff;border-bottom:1px solid #fff"></div><div class="t sb" style="left:10px;top:773px;">For Help, press F1</div><div class="ssep" style="left:489px"></div><div class="ssep" style="left:565px"></div><div class="ssep" style="left:633px"></div><div class="ssep" style="left:723px"></div><div class="ssep" style="left:800px"></div><div class="ssep" style="left:877px"></div><div class="ssep" style="left:927px"></div><div class="ssep" style="left:997px"></div><div class="ssep" style="left:1067px"></div><div class="ssep" style="left:1143px"></div><div class="ssep" style="left:1248px"></div><div class="ssep" style="left:1345px"></div><div class="t sb" style="left:450px;top:773px;">Acct:</div><div class="t sb" style="left:494px;top:773px;">Open Psns:</div><div class="t sb" style="left:570px;top:773px;">DT BP: N/A</div><div class="t sb" style="left:638px;top:773px;">Purch Pwr: N/A</div><div class="t sb" style="left:728px;top:773px;">Closed P/L:</div><div class="t sb" style="left:805px;top:773px;">Closed P/L:</div><div class="t sb" style="left:882px;top:773px;">RT TE:</div><div class="t sb" style="left:932px;top:773px;">Open P/L:</div><div class="t sb" style="left:1002px;top:773px;color:#2a8a2a;letter-spacing:-0.6px">ORDER BAR</div><div class="t sb" style="left:1072px;top:773px;color:#e01010;letter-spacing:-0.4px">OE MACROS</div><div class="abs" style="left:1146px;top:770px;width:45px;height:17px;background:#e00000"></div><div class="t sb" style="left:1148px;top:773px;color:#fff">Trading</div><div class="abs" style="left:1195px;top:770px;width:28px;height:17px;background:#00b000"></div><div class="t sb" style="left:1197px;top:773px;color:#fff">Data</div><svg class="abs" style="left:1228px;top:771px" width="14" height="14" viewBox="0 0 14 14"><path d="M7 1c-3 0-4 3-4 6l-2 4h12l-2-4c0-3-1-6-4-6z" fill="#f0c040" stroke="#c89020"/><circle cx="7" cy="12" r="1.5" fill="#c89020"/></svg><div class="t sb" style="left:1252px;top:773px;">2014-01-14 03:27</div><svg class="abs" style="left:1352px;top:776px" width="10" height="10"><g fill="#b0b0b0"><rect x="7" y="1" width="2" height="2"/><rect x="4" y="4" width="2" height="2"/><rect x="7" y="4" width="2" height="2"/><rect x="1" y="7" width="2" height="2"/><rect x="4" y="7" width="2" height="2"/><rect x="7" y="7" width="2" height="2"/></g></svg>
<div class="abs dlg"></div><div class="t dt" style="left:480px;top:124px;font-size:11.6px;letter-spacing:0;color:#1a1a2a">Format Symbol - EUR 15 min [FOREX] Евро / Американский доллар</div><div class="abs" style="left:861px;top:121px;width:31px;height:17px;border:1px solid #6b2a20;border-radius:3px;background:linear-gradient(#eaa898 0,#d8705a 45%,#c0402a 55%,#d06850 100%)"></div><svg class="abs" style="left:870px;top:123px" width="13" height="12" viewBox="0 0 13 12"><path d="M2.5 2l8 8M10.5 2l-8 8" stroke="#5a2018" stroke-width="3.2"/><path d="M2.5 2l8 8M10.5 2l-8 8" stroke="#fff" stroke-width="1.6"/></svg><div class="abs dcont"></div><div class="abs" style="left:481px;top:168px;width:405px;height:480px;background:#fff;border:1px solid #898c95"></div><div class="tab" style="left:535px;width:40px"></div><div class="tab" style="left:574px;width:48px"></div><div class="tab" style="left:622px;width:57px"></div><div class="abs" style="left:481px;top:148px;width:54px;height:21px;background:#fff;border:1px solid #898c95;border-bottom:none"></div><div class="t dt" style="left:489px;top:153px;">Settings</div><div class="t dt" style="left:539px;top:155px;">Style</div><div class="t dt" style="left:581px;top:155px;">Scaling</div><div class="t dt" style="left:628px;top:155px;">Properties</div><div class="t dt" style="left:496px;top:188px;">Symbol:</div><div class="edit" style="left:550px;top:181px;width:225px;height:21px;border-color:#7eb4ea;border-radius:2px"></div><div class="abs" style="left:552px;top:184px;width:25px;height:13px;background:#3399ff"></div><div class="t dt" style="left:553px;top:186px;color:#fff">EUR</div><div class="darr" style="left:762px;top:190px;border-top-color:#000;border-width:4px 4px 0 4px"></div><div class="btn" style="left:783px;top:182px;width:75px;height:21px"></div><svg class="abs" style="left:788px;top:184px" width="18" height="16" viewBox="0 0 18 16" shape-rendering="crispEdges"><rect x="0" y="4" width="17" height="12" fill="#e4e4e4"/><rect x="6" y="1" width="11" height="6" fill="#000080"/><rect x="7" y="2" width="9" height="4" fill="#fff"/><rect x="8" y="2" width="1" height="3" fill="#000080"/><rect x="10" y="2" width="1" height="3" fill="#000080"/><rect x="12" y="2" width="1" height="3" fill="#000080"/><rect x="14" y="2" width="1" height="3" fill="#000080"/><rect x="6" y="1" width="11" height="1" fill="#fff"/><rect x="1.5" y="6.5" width="6" height="4" fill="#fff" stroke="#808080"/><path d="M0 10.5h8" stroke="#000080"/><circle cx="10" cy="10" r="3" fill="#fff" stroke="#000" shape-rendering="auto"/><rect x="9" y="9" width="2" height="2" fill="#2040ff"/><path d="M12 12l3 3" stroke="#000" stroke-width="1.6" shape-rendering="auto"/></svg><div class="t dt" style="left:811px;top:187px;"><u>L</u>ookup...</div><div class="t dt" style="left:496px;top:221px;">Select Interval:</div><div class="gl" style="left:569px;top:226px;width:27px"></div><div class="t dt" style="left:620px;top:221px;">Interval Settings:</div><div class="gl" style="left:701px;top:226px;width:162px"></div><div class="abs" style="left:494px;top:237px;width:104px;height:216px;background:#fff;border:1px solid #828790"></div><div class="abs" style="left:496px;top:267px;width:100px;height:14px;background:#3399ff"></div><div class="t dt" style="left:498px;top:241px;">Tick</div><div class="t dt" style="left:498px;top:255px;">Volume</div><div class="t dt" style="left:498px;top:269px;color:#fff">Intra-day</div><div class="t dt" style="left:498px;top:283px;">Daily</div><div class="t dt" style="left:498px;top:297px;">Weekly</div><div class="t dt" style="left:498px;top:311px;">Monthly</div><div class="abs" style="left:498px;top:330px;width:95px;height:1px;background:#404040"></div><div class="t dt" style="left:498px;top:339px;">Kagi</div><div class="t dt" style="left:498px;top:353px;">Kase</div><div class="t dt" style="left:498px;top:367px;">Line Break</div><div class="t dt" style="left:498px;top:381px;">Momentum</div><div class="t dt" style="left:498px;top:395px;">Point &amp; Figure</div><div class="t dt" style="left:498px;top:409px;">Range</div><div class="t dt" style="left:498px;top:423px;">Renko</div><div class="edit" style="left:648px;top:244px;width:60px;height:20px"></div><div class="t dt num" style="left:652px;top:249px;">15</div><div class="t dt" style="left:715px;top:249px;">Minute Bar</div><div class="t dt" style="left:648px;top:275px;">For volume, use:</div><div class="t dt" style="left:748px;top:275px;">For bar building, use:</div><div class="btn" style="left:648px;top:292px;width:87px;height:21px"></div><div class="t dt" style="left:652px;top:298px;">Trade Vol</div><div class="darr" style="left:722px;top:301px;border-top-color:#000;border-width:4px 4px 0 4px"></div><div class="btn" style="left:748px;top:292px;width:99px;height:21px"></div><div class="t dt" style="left:752px;top:298px;">Session Hours</div><div class="darr" style="left:834px;top:301px;border-top-color:#000;border-width:4px 4px 0 4px"></div><div class="t dt" style="left:620px;top:320px;">Range:</div><div class="gl" style="left:658px;top:325px;width:206px"></div><div class="t dt" style="left:652px;top:343px;">Last Date:</div><div class="edit" style="left:739px;top:336px;width:111px;height:24px"></div><div class="t dt num" style="left:741px;top:343px;">01/14/2014</div><svg class="abs" style="left:822px;top:341px" width="20" height="14" viewBox="0 0 20 14"><rect x="1.5" y="1.5" width="9" height="10" fill="#eee" stroke="#888"/><path d="M3 4.5h6M3 7h6M3 9.5h6M5 3v8M7.5 3v8" stroke="#bbb"/><path d="M13 5l3 3 3-3z" fill="#4a6fa0"/></svg><div class="radio" style="left:652px;top:372px;background:radial-gradient(circle,#6fd0ff 0,#1a5fa0 2.5px,#dfe8f0 3.5px,#c8c8c8 100%)"></div><div class="edit" style="left:679px;top:370px;width:51px;height:20px"></div><div class="t dt num" style="left:683px;top:375px;">100</div><div class="btn" style="left:740px;top:370px;width:110px;height:21px"></div><div class="t dt" style="left:744px;top:376px;">Days Back</div><div class="darr" style="left:837px;top:379px;border-top-color:#000;border-width:4px 4px 0 4px"></div><div class="radio" style="left:652px;top:403px"></div><div class="t dt" style="left:668px;top:404px;">Bars Back</div><div class="edit" style="left:740px;top:398px;width:111px;height:23px;border-color:#a0a0a0"></div><div class="t dt num" style="left:744px;top:403px;color:#8a8a8a">300</div><div class="radio" style="left:652px;top:437px"></div><div class="t dt" style="left:668px;top:438px;">First Date</div><div class="edit" style="left:740px;top:429px;width:111px;height:24px;border-color:#c8d0dc"></div><div class="t dt num" style="left:742px;top:436px;color:#8a8a8a">11/22/2013</div><svg class="abs" style="left:823px;top:434px" width="20" height="14" viewBox="0 0 20 14"><rect x="1.5" y="1.5" width="9" height="10" fill="#f0f0f0" stroke="#bbb"/><path d="M3 4.5h6M3 7h6M3 9.5h6" stroke="#ddd"/><path d="M13 5l3 3 3-3z" fill="#bbb"/></svg><div class="chk" style="left:652px;top:466px"></div><svg class="abs" style="left:654px;top:468px" width="10" height="10"><path d="M1.5 5l2.5 3 5-7" stroke="#2a3f8f" stroke-width="1.8" fill="none"/></svg><div class="t dt" style="left:668px;top:466px;">Apply time-based Range setting to all</div><div class="t dt" style="left:668px;top:479px;">data series</div><div class="t dt" style="left:620px;top:496px;">Display:</div><div class="gl" style="left:659px;top:500px;width:204px"></div><div class="t dt" style="left:653px;top:514px;">Time Zone:</div><div class="btn" style="left:740px;top:507px;width:111px;height:21px"></div><div class="t dt" style="left:744px;top:513px;">Local</div><div class="darr" style="left:838px;top:516px;border-top-color:#000;border-width:4px 4px 0 4px"></div><div class="chk" style="left:496px;top:590px"></div><div class="t dt" style="left:512px;top:591px;">Set as Default</div><div class="btn" style="left:652px;top:656px;width:73px;height:21px;border-color:#3c7fb1;box-shadow:inset 0 0 0 1px #6ad0f8"></div><div class="t dt" style="left:680px;top:661px;">OK</div><div class="btn" style="left:733px;top:656px;width:73px;height:21px"></div><div class="t dt" style="left:750px;top:661px;">Отмена</div><div class="btn" style="left:814px;top:656px;width:73px;height:21px"></div><div class="t dt" style="left:838px;top:661px;">Help</div>
</body></html>
